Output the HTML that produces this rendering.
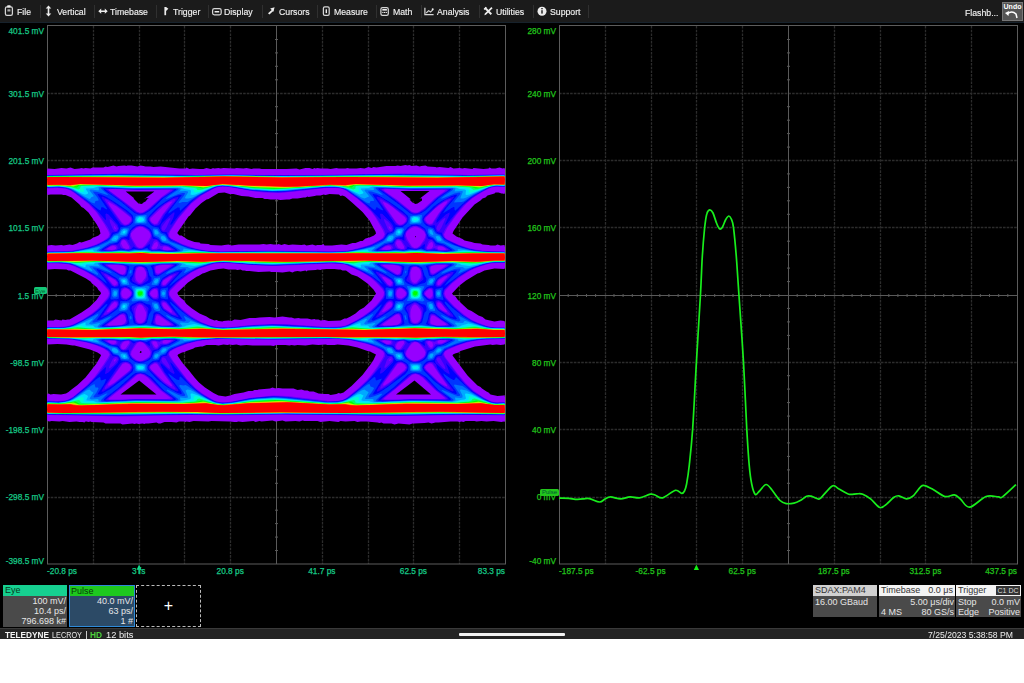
<!DOCTYPE html>
<html><head><meta charset="utf-8">
<style>
*{margin:0;padding:0;box-sizing:border-box}
html,body{width:1024px;height:683px;overflow:hidden;background:#fff}
body{position:relative;font-family:"Liberation Sans",sans-serif}
#scope{position:absolute;left:0;top:0;width:1024px;height:628px;background:#000}
#menu{position:absolute;left:0;top:0;width:1024px;height:23px;background:#1b1b1b;border-bottom:1px solid #17222c}
#menu svg{position:absolute}
.mi{position:absolute;top:6px;font-size:9.7px;color:#f2f2f2;white-space:nowrap;line-height:11px;transform:scaleX(0.9);transform-origin:0 0;-webkit-text-stroke:0.15px #f2f2f2}
.sep{position:absolute;top:5px;width:1.3px;height:12.5px;background:#303030}
.yl{position:absolute;font-size:8.3px;-webkit-text-stroke:0.25px currentColor;line-height:10px;white-space:nowrap;text-align:right}
.xl{position:absolute;font-size:8.3px;-webkit-text-stroke:0.25px currentColor;line-height:10px;white-space:nowrap}
.c1{color:#17c987}
.c2{color:#22c51c}
.bx{position:absolute;font-size:9px;line-height:10px;color:#e6e6e6;text-align:right;white-space:nowrap}
#status{position:absolute;left:0;top:628px;width:1024px;height:11px;background:#242424;border-top:1px solid #3a3a3a}
svg.full{position:absolute;left:0;top:0}
.gd{stroke:#2c2c2c;stroke-width:1.3;stroke-dasharray:2.6 1.1}
.ga{stroke:#5a5a5a;stroke-width:1}
.gb{stroke:#5c5c5c;stroke-width:1;fill:none}
</style></head><body>
<div id="scope">
<div id="menu">
<div class="mi" style="left:17px">File</div>
<div class="mi" style="left:56.5px">Vertical</div>
<div class="mi" style="left:110.4px">Timebase</div>
<div class="mi" style="left:172.5px">Trigger</div>
<div class="mi" style="left:224px">Display</div>
<div class="mi" style="left:278.5px">Cursors</div>
<div class="mi" style="left:333.5px">Measure</div>
<div class="mi" style="left:392.5px">Math</div>
<div class="mi" style="left:437px">Analysis</div>
<div class="mi" style="left:496px">Utilities</div>
<div class="mi" style="left:550px">Support</div>
<svg style="left:0;top:0" width="600" height="22" viewBox="0 0 600 22">
<g fill="none" stroke="#d6d6d6" stroke-width="1.25">
<rect x="5.4" y="6.8" width="7" height="8.6" rx="1.6"/>
<rect x="212.6" y="8.6" width="8.6" height="6.3" rx="1.8"/>
<rect x="323.4" y="6.9" width="5.8" height="8.4" rx="1.4"/>
<rect x="380.9" y="7.6" width="7.4" height="7.8" rx="1.6"/>
<path d="M424.9,7.8 V14.7 H433.6"/>
<path d="M426.2,13 L428.6,10.6 L430.6,12 L433,9.6" stroke-width="1.1"/>
</g>
<g fill="#ececec">
<rect x="7.2" y="5.2" width="3.4" height="2.4" rx="0.6"/>
<rect x="7.4" y="9.3" width="3" height="2.2" fill="#aaa"/>
<path d="M48.5,5.6 L51.3,8.6 L49.3,8.6 L49.3,13.6 L51.3,13.6 L48.5,16.6 L45.7,13.6 L47.7,13.6 L47.7,8.6 L45.7,8.6Z"/>
<path d="M98.3,11.2 L101.2,8.6 L101.2,10.4 L104.8,10.4 L104.8,8.6 L107.7,11.2 L104.8,13.8 L104.8,12 L101.2,12 L101.2,13.8Z"/>
<rect x="164.4" y="7" width="1.7" height="8.2"/>
<path d="M166,7 L168.4,8.8 L166,10.9Z"/>
<rect x="214.6" y="11" width="4.6" height="1.5"/>
<path d="M274.6,7.3 L270.2,8.5 L273.4,11.7Z"/>
<path d="M272.3,9.6 L268,13.2 L269.4,14.4 L273.6,10.8Z"/>
<rect x="325.6" y="9.3" width="1.4" height="3.8"/>
<rect x="382.3" y="9" width="4.6" height="1.6"/>
<rect x="382.3" y="11.9" width="1.2" height="1.1"/><rect x="384" y="11.9" width="1.2" height="1.1"/><rect x="385.7" y="11.9" width="1.2" height="1.1"/>
<circle cx="432.7" cy="9.2" r="1"/>
<path d="M484.2,8.4 L485.6,7 L492,13.5 L490.6,14.9Z"/>
<path d="M491.8,7.4 L492.6,8.2 L486,14.8 L484.4,15.2 L484.8,13.6 L491.4,7Z"/>
<path d="M483.6,9 L485.8,6.8 L486.8,7.8 L484.6,10Z"/>
<circle cx="542" cy="11.2" r="4.5"/>
</g>
<rect x="541.3" y="10.2" width="1.4" height="3.4" fill="#1b1b1b"/>
<rect x="541.3" y="8" width="1.4" height="1.3" fill="#1b1b1b"/>
</svg>
<div class="sep" style="left:40px"></div>
<div class="sep" style="left:94px"></div>
<div class="sep" style="left:156px"></div>
<div class="sep" style="left:208px"></div>
<div class="sep" style="left:262px"></div>
<div class="sep" style="left:317px"></div>
<div class="sep" style="left:376px"></div>
<div class="sep" style="left:421px"></div>
<div class="sep" style="left:479px"></div>
<div class="sep" style="left:533px"></div>
<div class="sep" style="left:588px"></div>
<div class="mi" style="left:965px;top:7px">Flashb...</div>
<div style="position:absolute;left:1002px;top:2px;width:21px;height:19px;background:#555;border:1px solid #777"></div>
<div style="position:absolute;left:1003px;top:3px;width:19px;font-size:7px;line-height:8px;color:#fff;text-align:center;font-weight:bold">Undo</div>
<svg style="left:1005px;top:10px" width="15" height="9" viewBox="0 0 15 9"><path d="M2,4 Q7,0 11,4 L12,8" stroke="#fff" stroke-width="1.5" fill="none"/><path d="M0,3 L4,1 L3.5,6Z" fill="#fff"/></svg>
</div>
<svg class="full" width="1024" height="628" viewBox="0 0 1024 628">
<line x1="93.5" y1="26" x2="93.5" y2="564" class="gd"/>
<line x1="139.5" y1="26" x2="139.5" y2="564" class="gd"/>
<line x1="184.5" y1="26" x2="184.5" y2="564" class="gd"/>
<line x1="230.5" y1="26" x2="230.5" y2="564" class="gd"/>
<line x1="322.5" y1="26" x2="322.5" y2="564" class="gd"/>
<line x1="368.5" y1="26" x2="368.5" y2="564" class="gd"/>
<line x1="413.5" y1="26" x2="413.5" y2="564" class="gd"/>
<line x1="459.5" y1="26" x2="459.5" y2="564" class="gd"/>
<line x1="47" y1="93.5" x2="505" y2="93.5" class="gd"/>
<line x1="47" y1="160.5" x2="505" y2="160.5" class="gd"/>
<line x1="47" y1="227.5" x2="505" y2="227.5" class="gd"/>
<line x1="47" y1="362.5" x2="505" y2="362.5" class="gd"/>
<line x1="47" y1="429.5" x2="505" y2="429.5" class="gd"/>
<line x1="47" y1="497.5" x2="505" y2="497.5" class="gd"/>
<line x1="276.5" y1="26" x2="276.5" y2="564" class="ga"/>
<line x1="47" y1="295.5" x2="505" y2="295.5" class="ga"/>
<line x1="56.2" y1="294.0" x2="56.2" y2="297.0" class="ga"/>
<line x1="65.3" y1="294.0" x2="65.3" y2="297.0" class="ga"/>
<line x1="74.5" y1="294.0" x2="74.5" y2="297.0" class="ga"/>
<line x1="83.6" y1="294.0" x2="83.6" y2="297.0" class="ga"/>
<line x1="102.0" y1="294.0" x2="102.0" y2="297.0" class="ga"/>
<line x1="111.1" y1="294.0" x2="111.1" y2="297.0" class="ga"/>
<line x1="120.3" y1="294.0" x2="120.3" y2="297.0" class="ga"/>
<line x1="129.4" y1="294.0" x2="129.4" y2="297.0" class="ga"/>
<line x1="147.8" y1="294.0" x2="147.8" y2="297.0" class="ga"/>
<line x1="156.9" y1="294.0" x2="156.9" y2="297.0" class="ga"/>
<line x1="166.1" y1="294.0" x2="166.1" y2="297.0" class="ga"/>
<line x1="175.2" y1="294.0" x2="175.2" y2="297.0" class="ga"/>
<line x1="193.6" y1="294.0" x2="193.6" y2="297.0" class="ga"/>
<line x1="202.7" y1="294.0" x2="202.7" y2="297.0" class="ga"/>
<line x1="211.9" y1="294.0" x2="211.9" y2="297.0" class="ga"/>
<line x1="221.0" y1="294.0" x2="221.0" y2="297.0" class="ga"/>
<line x1="239.4" y1="294.0" x2="239.4" y2="297.0" class="ga"/>
<line x1="248.5" y1="294.0" x2="248.5" y2="297.0" class="ga"/>
<line x1="257.7" y1="294.0" x2="257.7" y2="297.0" class="ga"/>
<line x1="266.8" y1="294.0" x2="266.8" y2="297.0" class="ga"/>
<line x1="285.2" y1="294.0" x2="285.2" y2="297.0" class="ga"/>
<line x1="294.3" y1="294.0" x2="294.3" y2="297.0" class="ga"/>
<line x1="303.5" y1="294.0" x2="303.5" y2="297.0" class="ga"/>
<line x1="312.6" y1="294.0" x2="312.6" y2="297.0" class="ga"/>
<line x1="331.0" y1="294.0" x2="331.0" y2="297.0" class="ga"/>
<line x1="340.1" y1="294.0" x2="340.1" y2="297.0" class="ga"/>
<line x1="349.3" y1="294.0" x2="349.3" y2="297.0" class="ga"/>
<line x1="358.4" y1="294.0" x2="358.4" y2="297.0" class="ga"/>
<line x1="376.8" y1="294.0" x2="376.8" y2="297.0" class="ga"/>
<line x1="385.9" y1="294.0" x2="385.9" y2="297.0" class="ga"/>
<line x1="395.1" y1="294.0" x2="395.1" y2="297.0" class="ga"/>
<line x1="404.2" y1="294.0" x2="404.2" y2="297.0" class="ga"/>
<line x1="422.6" y1="294.0" x2="422.6" y2="297.0" class="ga"/>
<line x1="431.7" y1="294.0" x2="431.7" y2="297.0" class="ga"/>
<line x1="440.9" y1="294.0" x2="440.9" y2="297.0" class="ga"/>
<line x1="450.0" y1="294.0" x2="450.0" y2="297.0" class="ga"/>
<line x1="468.4" y1="294.0" x2="468.4" y2="297.0" class="ga"/>
<line x1="477.5" y1="294.0" x2="477.5" y2="297.0" class="ga"/>
<line x1="486.7" y1="294.0" x2="486.7" y2="297.0" class="ga"/>
<line x1="495.8" y1="294.0" x2="495.8" y2="297.0" class="ga"/>
<line x1="275.0" y1="39.5" x2="278.0" y2="39.5" class="ga"/>
<line x1="275.0" y1="52.9" x2="278.0" y2="52.9" class="ga"/>
<line x1="275.0" y1="66.3" x2="278.0" y2="66.3" class="ga"/>
<line x1="275.0" y1="79.8" x2="278.0" y2="79.8" class="ga"/>
<line x1="275.0" y1="106.7" x2="278.0" y2="106.7" class="ga"/>
<line x1="275.0" y1="120.2" x2="278.0" y2="120.2" class="ga"/>
<line x1="275.0" y1="133.6" x2="278.0" y2="133.6" class="ga"/>
<line x1="275.0" y1="147.1" x2="278.0" y2="147.1" class="ga"/>
<line x1="275.0" y1="173.9" x2="278.0" y2="173.9" class="ga"/>
<line x1="275.0" y1="187.4" x2="278.0" y2="187.4" class="ga"/>
<line x1="275.0" y1="200.8" x2="278.0" y2="200.8" class="ga"/>
<line x1="275.0" y1="214.3" x2="278.0" y2="214.3" class="ga"/>
<line x1="275.0" y1="241.2" x2="278.0" y2="241.2" class="ga"/>
<line x1="275.0" y1="254.7" x2="278.0" y2="254.7" class="ga"/>
<line x1="275.0" y1="268.1" x2="278.0" y2="268.1" class="ga"/>
<line x1="275.0" y1="281.6" x2="278.0" y2="281.6" class="ga"/>
<line x1="275.0" y1="308.4" x2="278.0" y2="308.4" class="ga"/>
<line x1="275.0" y1="321.9" x2="278.0" y2="321.9" class="ga"/>
<line x1="275.0" y1="335.4" x2="278.0" y2="335.4" class="ga"/>
<line x1="275.0" y1="348.8" x2="278.0" y2="348.8" class="ga"/>
<line x1="275.0" y1="375.7" x2="278.0" y2="375.7" class="ga"/>
<line x1="275.0" y1="389.1" x2="278.0" y2="389.1" class="ga"/>
<line x1="275.0" y1="402.6" x2="278.0" y2="402.6" class="ga"/>
<line x1="275.0" y1="416.1" x2="278.0" y2="416.1" class="ga"/>
<line x1="275.0" y1="442.9" x2="278.0" y2="442.9" class="ga"/>
<line x1="275.0" y1="456.4" x2="278.0" y2="456.4" class="ga"/>
<line x1="275.0" y1="469.9" x2="278.0" y2="469.9" class="ga"/>
<line x1="275.0" y1="483.3" x2="278.0" y2="483.3" class="ga"/>
<line x1="275.0" y1="510.2" x2="278.0" y2="510.2" class="ga"/>
<line x1="275.0" y1="523.6" x2="278.0" y2="523.6" class="ga"/>
<line x1="275.0" y1="537.1" x2="278.0" y2="537.1" class="ga"/>
<line x1="275.0" y1="550.5" x2="278.0" y2="550.5" class="ga"/>
<rect x="47.5" y="25.5" width="458" height="538.5" class="gb"/>
<line x1="605.5" y1="26" x2="605.5" y2="564" class="gd"/>
<line x1="651.5" y1="26" x2="651.5" y2="564" class="gd"/>
<line x1="696.5" y1="26" x2="696.5" y2="564" class="gd"/>
<line x1="742.5" y1="26" x2="742.5" y2="564" class="gd"/>
<line x1="834.5" y1="26" x2="834.5" y2="564" class="gd"/>
<line x1="880.5" y1="26" x2="880.5" y2="564" class="gd"/>
<line x1="925.5" y1="26" x2="925.5" y2="564" class="gd"/>
<line x1="971.5" y1="26" x2="971.5" y2="564" class="gd"/>
<line x1="559" y1="93.5" x2="1017" y2="93.5" class="gd"/>
<line x1="559" y1="160.5" x2="1017" y2="160.5" class="gd"/>
<line x1="559" y1="227.5" x2="1017" y2="227.5" class="gd"/>
<line x1="559" y1="362.5" x2="1017" y2="362.5" class="gd"/>
<line x1="559" y1="429.5" x2="1017" y2="429.5" class="gd"/>
<line x1="559" y1="497.5" x2="1017" y2="497.5" class="gd"/>
<line x1="788.5" y1="26" x2="788.5" y2="564" class="ga"/>
<line x1="559" y1="295.5" x2="1017" y2="295.5" class="ga"/>
<line x1="568.2" y1="294.0" x2="568.2" y2="297.0" class="ga"/>
<line x1="577.3" y1="294.0" x2="577.3" y2="297.0" class="ga"/>
<line x1="586.5" y1="294.0" x2="586.5" y2="297.0" class="ga"/>
<line x1="595.6" y1="294.0" x2="595.6" y2="297.0" class="ga"/>
<line x1="614.0" y1="294.0" x2="614.0" y2="297.0" class="ga"/>
<line x1="623.1" y1="294.0" x2="623.1" y2="297.0" class="ga"/>
<line x1="632.3" y1="294.0" x2="632.3" y2="297.0" class="ga"/>
<line x1="641.4" y1="294.0" x2="641.4" y2="297.0" class="ga"/>
<line x1="659.8" y1="294.0" x2="659.8" y2="297.0" class="ga"/>
<line x1="668.9" y1="294.0" x2="668.9" y2="297.0" class="ga"/>
<line x1="678.1" y1="294.0" x2="678.1" y2="297.0" class="ga"/>
<line x1="687.2" y1="294.0" x2="687.2" y2="297.0" class="ga"/>
<line x1="705.6" y1="294.0" x2="705.6" y2="297.0" class="ga"/>
<line x1="714.7" y1="294.0" x2="714.7" y2="297.0" class="ga"/>
<line x1="723.9" y1="294.0" x2="723.9" y2="297.0" class="ga"/>
<line x1="733.0" y1="294.0" x2="733.0" y2="297.0" class="ga"/>
<line x1="751.4" y1="294.0" x2="751.4" y2="297.0" class="ga"/>
<line x1="760.5" y1="294.0" x2="760.5" y2="297.0" class="ga"/>
<line x1="769.7" y1="294.0" x2="769.7" y2="297.0" class="ga"/>
<line x1="778.8" y1="294.0" x2="778.8" y2="297.0" class="ga"/>
<line x1="797.2" y1="294.0" x2="797.2" y2="297.0" class="ga"/>
<line x1="806.3" y1="294.0" x2="806.3" y2="297.0" class="ga"/>
<line x1="815.5" y1="294.0" x2="815.5" y2="297.0" class="ga"/>
<line x1="824.6" y1="294.0" x2="824.6" y2="297.0" class="ga"/>
<line x1="843.0" y1="294.0" x2="843.0" y2="297.0" class="ga"/>
<line x1="852.1" y1="294.0" x2="852.1" y2="297.0" class="ga"/>
<line x1="861.3" y1="294.0" x2="861.3" y2="297.0" class="ga"/>
<line x1="870.4" y1="294.0" x2="870.4" y2="297.0" class="ga"/>
<line x1="888.8" y1="294.0" x2="888.8" y2="297.0" class="ga"/>
<line x1="897.9" y1="294.0" x2="897.9" y2="297.0" class="ga"/>
<line x1="907.1" y1="294.0" x2="907.1" y2="297.0" class="ga"/>
<line x1="916.2" y1="294.0" x2="916.2" y2="297.0" class="ga"/>
<line x1="934.6" y1="294.0" x2="934.6" y2="297.0" class="ga"/>
<line x1="943.7" y1="294.0" x2="943.7" y2="297.0" class="ga"/>
<line x1="952.9" y1="294.0" x2="952.9" y2="297.0" class="ga"/>
<line x1="962.0" y1="294.0" x2="962.0" y2="297.0" class="ga"/>
<line x1="980.4" y1="294.0" x2="980.4" y2="297.0" class="ga"/>
<line x1="989.5" y1="294.0" x2="989.5" y2="297.0" class="ga"/>
<line x1="998.7" y1="294.0" x2="998.7" y2="297.0" class="ga"/>
<line x1="1007.8" y1="294.0" x2="1007.8" y2="297.0" class="ga"/>
<line x1="787.0" y1="39.5" x2="790.0" y2="39.5" class="ga"/>
<line x1="787.0" y1="52.9" x2="790.0" y2="52.9" class="ga"/>
<line x1="787.0" y1="66.3" x2="790.0" y2="66.3" class="ga"/>
<line x1="787.0" y1="79.8" x2="790.0" y2="79.8" class="ga"/>
<line x1="787.0" y1="106.7" x2="790.0" y2="106.7" class="ga"/>
<line x1="787.0" y1="120.2" x2="790.0" y2="120.2" class="ga"/>
<line x1="787.0" y1="133.6" x2="790.0" y2="133.6" class="ga"/>
<line x1="787.0" y1="147.1" x2="790.0" y2="147.1" class="ga"/>
<line x1="787.0" y1="173.9" x2="790.0" y2="173.9" class="ga"/>
<line x1="787.0" y1="187.4" x2="790.0" y2="187.4" class="ga"/>
<line x1="787.0" y1="200.8" x2="790.0" y2="200.8" class="ga"/>
<line x1="787.0" y1="214.3" x2="790.0" y2="214.3" class="ga"/>
<line x1="787.0" y1="241.2" x2="790.0" y2="241.2" class="ga"/>
<line x1="787.0" y1="254.7" x2="790.0" y2="254.7" class="ga"/>
<line x1="787.0" y1="268.1" x2="790.0" y2="268.1" class="ga"/>
<line x1="787.0" y1="281.6" x2="790.0" y2="281.6" class="ga"/>
<line x1="787.0" y1="308.4" x2="790.0" y2="308.4" class="ga"/>
<line x1="787.0" y1="321.9" x2="790.0" y2="321.9" class="ga"/>
<line x1="787.0" y1="335.4" x2="790.0" y2="335.4" class="ga"/>
<line x1="787.0" y1="348.8" x2="790.0" y2="348.8" class="ga"/>
<line x1="787.0" y1="375.7" x2="790.0" y2="375.7" class="ga"/>
<line x1="787.0" y1="389.1" x2="790.0" y2="389.1" class="ga"/>
<line x1="787.0" y1="402.6" x2="790.0" y2="402.6" class="ga"/>
<line x1="787.0" y1="416.1" x2="790.0" y2="416.1" class="ga"/>
<line x1="787.0" y1="442.9" x2="790.0" y2="442.9" class="ga"/>
<line x1="787.0" y1="456.4" x2="790.0" y2="456.4" class="ga"/>
<line x1="787.0" y1="469.9" x2="790.0" y2="469.9" class="ga"/>
<line x1="787.0" y1="483.3" x2="790.0" y2="483.3" class="ga"/>
<line x1="787.0" y1="510.2" x2="790.0" y2="510.2" class="ga"/>
<line x1="787.0" y1="523.6" x2="790.0" y2="523.6" class="ga"/>
<line x1="787.0" y1="537.1" x2="790.0" y2="537.1" class="ga"/>
<line x1="787.0" y1="550.5" x2="790.0" y2="550.5" class="ga"/>
<rect x="559.5" y="25.5" width="458" height="538.5" class="gb"/>
<defs><clipPath id="cpl"><rect x="47" y="26" width="458" height="538"/></clipPath><filter id="eblur" x="-2%" y="-2%" width="104%" height="104%"><feGaussianBlur stdDeviation="0.55"/></filter></defs><g clip-path="url(#cpl)"><g transform="translate(47.5 26.5) scale(0.5)" fill-rule="evenodd">
<path fill="rgb(150,0,255)" d="M730 794l-6 2 -22 -2 -8 2 -6 -2 -16 0 -4 -2 -4 1 -4 -1 -22 -2 -12 0 -6 1 -6 -2 -18 1 -10 -1 -4 2 -18 -2 -18 2 -6 -2 -26 0 -4 -1 -6 2 -8 -1 -20 1 -6 -2 -14 2 -6 -2 -22 2 -4 -1 -8 2 -4 -2 -22 2 -8 -1 -4 1 -4 0 -10 -1 -36 -1 -6 1 -30 -1 -8 2 -6 -1 -2 1 -4 -1 -9 0 -5 2 -10 -1 -14 0 -8 3 -4 0 -4 -2 -16 2 -6 0 -2 1 -4 -1 -8 1 -4 -1 -4 1 -4 -1 -20 2 -4 -2 -30 0 -4 -2 -24 -1 -2 -1 -4 1 -4 -1 -2 0 -2 2 -4 -1 -6 0 -6 -1 -14 1 -14 -2 -6 1 -16 -1 -4 1 -4 -1 -2 -5 0 -18 0 -26 2 -5 2 -1 4 2 6 -1 15 1 10 -2 5 -3 6 -5 12 -9 16 -15 22 -28 9 -16 -1 -2 -6 -4 -15 -6 -31 -8 -4 0 -12 -2 -18 -1 -20 1 -2 -8 1 -38 1 -2 12 0 4 -2 12 2 2 -2 6 1 4 -1 4 0 24 -14 16 -11 14 -14 9 -13 -1 -3 -4 -4 -3 -5 -10 -8 -3 -4 -9 -6 -31 -16 -4 0 -4 -2 -24 -1 -12 1 -2 0 -1 -2 -1 -6 0 -32 2 -8 8 -1 8 1 12 -1 4 1 12 -2 6 1 9 -3 5 -3 4 1 18 -6 4 -3 12 -5 4 -4 -2 -8 -6 -11 -16 -23 -10 -9 -4 -2 -4 -5 -16 -14 -12 -5 -4 0 -4 -1 -22 0 -6 1 -2 -7 0 -22 0 -18 2 -6 14 1 14 -2 10 1 8 -2 8 3 10 -1 4 -1 4 1 4 -1 10 1 4 -2 22 0 4 -2 4 1 12 -3 6 2 4 -1 12 -1 4 1 2 -1 8 0 12 2 6 -2 6 1 4 1 10 0 6 1 14 -1 38 4 12 0 2 -2 6 3 6 -1 14 1 8 0 6 -2 8 2 4 -1 0 -1 4 1 8 -1 4 1 6 -1 22 1 4 -1 14 1 6 -1 10 2 4 -1 12 0 4 1 34 0 8 0 8 0 20 -1 6 2 12 -3 8 0 6 2 4 -2 2 1 4 -1 6 1 14 0 6 1 12 -2 4 1 14 0 4 -1 4 1 14 0 8 -1 8 1 8 -3 6 2 4 -2 6 1 20 -3 18 0 4 -1 6 1 10 -2 4 1 4 -1 4 2 10 -1 6 2 4 -1 8 -1 4 2 16 1 2 1 6 -1 18 2 4 -2 6 3 12 -1 6 1 4 -1 16 2 2 -2 20 2 10 -1 2 -2 4 2 8 0 8 -2 6 2 4 -1 2 7 0 18 0 20 -2 7 -4 -1 -2 0 -6 -2 -6 0 -2 2 -14 4 -4 4 -6 2 -4 4 -12 8 -24 26 -18 27 -2 5 8 6 12 5 4 3 14 3 6 2 12 1 4 2 12 1 4 1 10 0 4 -2 6 2 8 -1 2 9 -1 36 -1 3 -20 -1 -20 4 -10 5 -4 1 -23 14 -13 10 -15 16 3 4 4 2 4 6 8 8 13 12 7 3 14 9 8 3 6 5 18 4 12 -2 8 1 2 7 0 18 0 18 -2 4 -8 1 -8 -1 -8 1 -4 -1 -31 4 -29 9 -4 3 -7 2 -4 2 -1 2 30 40 20 20 6 3 3 3 9 6 4 2 4 4 14 3 12 -1 2 -1 2 9 0 36 -1 6 -1 3 -2 -1 -4 1 -16 -2 -14 1 -10 -1 -10 1 -4 -1 -18 0 -4 2 -4 -1 -4 1 -4 -1 -14 0 -24 2 -6 0 -8 2 -6 -2 -8 1 -20 1 -4 0zM569 438l19 -2 10 1 12 -4 6 0 10 -4 4 0 6 -5 8 -2 9 -4 4 -4 -1 -4 -12 -22 -14 -17 -21 -19 -14 -12 -5 -2 -4 1 -3 -3 -19 -1 -8 2 -4 -1 -6 2 -8 0 -4 1 -12 2 -2 -1 -4 2 -4 0 -12 2 -2 0 -8 0 -6 2 -6 0 -12 1 -6 -1 -14 0 -6 -1 -6 0 -4 -2 -14 0 -14 -3 -14 -1 -16 -4 -8 0 -10 -3 -12 1 -20 12 -4 1 -10 7 -12 11 -11 14 -3 2 -22 32 0 2 4 4 4 0 12 8 14 5 10 1 2 2 16 1 4 2 22 1 6 -1 8 -1 6 2 14 -2 42 0 8 -1 6 1 8 -1 6 1 8 0 2 -1 6 2 6 -2 8 2 8 -1 18 1 6 -1 4 2 12 -2 6 2 4 -1 8 0 4 -2 2 3 15 0zM190 354l2 -2 4 -2 4 -5 3 -1 -5 -1 -6 2 -4 -2 -14 0 -2 1 10 10 6 1 2 -1zM740 354l9 -6 0 -2 0 -2 -11 -1 -14 3 6 6 6 3 4 -1zM736 422l1 -2 -1 -1 -1 1 1 2zM586 588l8 -4 4 0 8 -4 10 -6 8 -7 9 -5 15 -14 9 -14 -5 -8 -12 -12 -14 -10 -6 -4 -12 -4 -11 -8 -7 0 -4 -2 -4 0 -8 -1 -16 0 -10 1 -2 1 -6 -1 -4 1 -16 1 -2 2 -2 -2 -10 2 -6 -1 -6 1 -4 2 -6 -2 -14 2 -14 -1 -8 0 -4 -1 -22 1 -18 -2 -6 0 -4 -1 -4 0 -4 -2 -6 1 -4 -1 -14 0 -10 -2 -10 1 -16 3 -12 5 -4 1 -8 5 -3 1 -18 12 -21 20 0 2 2 4 6 6 4 3 6 8 11 9 15 10 14 6 6 4 10 4 4 -1 4 2 8 1 2 -1 10 -1 6 1 6 -3 12 1 18 -4 12 0 8 -1 20 -1 10 1 16 -2 14 2 4 0 6 2 8 -1 4 1 14 0 8 2 6 -1 2 1 6 0 4 2 8 -1 8 2 24 -1zM365 738l9 -3 18 -3 10 -3 8 0 4 -2 6 0 2 -1 23 -2 5 -2 6 2 6 -1 8 1 4 0 18 0 8 3 8 -1 6 2 6 0 4 2 8 0 10 4 12 1 8 0 4 2 12 -2 4 -2 4 1 6 -2 16 -13 22 -22 16 -21 6 -9 5 -11 -12 -6 -5 -1 -20 -7 -18 -4 -22 -2 -6 1 -14 0 -4 -1 -14 1 -12 -1 -14 2 -16 -1 -6 1 -6 -1 -4 1 -8 -1 -18 0 -6 2 -6 -1 -26 0 -6 0 -4 0 -12 -1 -12 1 -8 -2 -8 1 -6 -1 -4 1 -8 -1 -10 2 -6 -1 -18 0 -8 3 -4 0 -11 2 -3 2 -14 5 -4 2 -5 1 -8 4 -1 2 10 15 13 15 11 14 9 10 12 10 17 11 10 5 14 2 9 -2zM188 652l0 -2 -2 -1 -2 3 2 1 2 -1zM198 728l4 -2 -1 -2 -11 -9 -6 1 -8 8 0 2 14 0 8 2zM748 728l1 -2 -1 -4 -6 -5 -6 -3 -11 10 0 2 3 1 8 0 6 -1 2 0 2 2 2 0z"/>
<g filter="url(#eblur)">
<path fill="rgb(98, 0, 255)" d="M768 778l-76 1 -72 -1 -154 -2 -106 2 -74 -1 -138 3 -148 -3 -1 -11 1 -18 18 1 17 -1 7 -2 10 -6 26 -22 16 -17 18 -25 9 -14 3 -6 -3 -6 -9 -6 -14 -6 -20 -6 -29 -6 -49 -1 -1 -11 1 -13 22 0 16 -1 13 -4 16 -8 19 -12 15 -12 19 -22 2 -4 1 -4 -1 -4 -2 -4 -17 -18 -13 -10 -18 -10 -28 -12 -14 -2 -30 0 -1 -12 1 -12 28 0 22 -2 29 -6 18 -6 16 -8 8 -6 3 -6 -2 -6 -8 -14 -16 -24 -15 -16 -28 -22 -9 -6 -10 -4 -16 -1 -20 1 -1 -16 1 -11 78 -1 70 -2 150 3 60 -1 116 1 146 -1 86 -2 138 3 70 -1 1 12 -1 13 -14 -1 -12 2 -13 6 -23 14 -14 12 -20 23 -18 25 -7 14 2 6 5 4 21 10 24 8 22 4 13 1 34 1 1 12 -1 11 -14 0 -15 1 -20 6 -19 8 -19 12 -18 14 -13 14 -2 6 3 8 17 18 19 16 14 10 13 6 22 8 13 2 19 0 1 12 -1 11 -41 1 -26 4 -21 6 -20 8 -8 4 -3 2 -2 4 1 4 2 4 24 32 17 20 15 14 20 14 16 8 10 2 16 -1 1 15 -1 12 -62 -1 -84 1zM576 450l27 -2 38 -10 10 -4 15 -8 5 -4 3 -6 -3 -8 -15 -26 -9 -12 -12 -12 -16 -14 -22 -16 -11 -4 -10 -1 -18 0 -72 8 -24 2 -30 -1 -24 -3 -52 -9 -8 0 -10 2 -9 4 -21 12 -20 16 -26 30 -17 26 -2 6 1 4 3 4 20 10 29 10 21 4 29 2 96 -2 134 2zM190 372l10 -6 28 -25 18 -13 -2 -1 -6 -1 -56 1 -52 -2 -7 1 0 2 3 2 26 19 27 21 5 2 6 0zM740 372l13 -8 21 -20 22 -16 -6 -2 -56 1 -54 -2 -8 1 3 4 25 17 28 23 6 2 6 0zM219 394l11 -18 20 -26 -2 0 -6 2 -11 8 -25 24 0 4 4 5 4 2 5 -1zM769 394l13 -20 16 -20 2 -5 -8 3 -9 6 -10 8 -17 17 0 5 4 5 4 2 5 -1zM158 396l4 -2 4 -4 1 -4 -1 -4 -28 -22 -16 -9 -1 1 3 6 25 34 5 4 4 0zM708 396l4 -2 4 -4 1 -4 -2 -4 -24 -20 -12 -8 -7 -3 -1 1 3 6 24 34 5 4 5 0zM137 404l-3 -5 -1 1 1 4 2 1 1 -1zM687 404l-3 -4 -2 0 2 4 2 1 1 -1zM190 442l6 -6 7 -10 3 -6 0 -4 -3 -6 -5 -4 -8 -5 -6 0 -6 2 -8 7 -3 4 0 4 2 6 10 16 5 3 6 -1zM740 442l5 -4 8 -12 2 -4 1 -6 -3 -6 -5 -4 -7 -4 -7 -1 -6 2 -8 6 -3 5 0 4 3 8 9 14 5 3 6 -1zM163 444l0 -4 -6 -10 -3 -3 -5 1 -1 2 -1 4 4 8 7 3 5 -1zM713 444l0 -4 -6 -10 -3 -2 -5 0 -1 2 -1 4 4 8 7 3 5 -1zM218 444l3 -6 -1 -6 -2 -1 -4 2 -5 9 0 2 3 1 6 -1zM768 444l3 -4 0 -4 -1 -4 -2 -1 -4 2 -5 9 0 2 3 1 6 -1zM135 446l2 -2 0 -2 -1 -2 -4 -1 -6 1 -6 4 -1 2 9 1 7 -1zM248 446l-5 -4 -7 -2 -4 0 -2 4 1 2 7 2 6 -1 4 -1zM685 446l2 -2 0 -2 -1 -2 -4 -1 -6 1 -6 4 -1 2 9 1 7 -1zM798 446l-5 -4 -5 -2 -6 0 -2 2 0 2 1 2 5 1 8 0 4 -1zM357 602l53 -5 38 -2 26 0 84 6 30 -1 8 -2 17 -8 17 -10 14 -10 13 -12 13 -16 2 -4 1 -6 -3 -6 -13 -14 -11 -10 -13 -8 -15 -8 -23 -10 -23 -2 -114 5 -52 -2 -50 -4 -21 1 -31 10 -16 8 -22 16 -20 20 -2 4 0 4 4 7 20 21 20 16 17 10 20 8 19 4 13 0zM154 494l2 -4 0 -6 -2 -4 -4 -2 -24 -2 -4 1 -2 1 26 17 4 1 4 -2zM223 494l25 -16 -6 -1 -12 0 -8 1 -4 1 -2 3 0 8 2 3 2 1 3 0zM704 494l2 -4 0 -6 -2 -4 -2 -1 -8 -2 -14 -1 -6 0 -4 2 26 16 4 2 4 -2zM773 494l25 -16 -6 -1 -12 0 -8 1 -4 1 -2 3 0 8 3 4 4 0zM188 512l8 -10 1 -4 0 -6 -3 -6 -2 -3 -4 -2 -4 0 -4 2 -2 3 -2 8 0 8 2 6 4 4 2 1 4 -1zM738 512l8 -10 1 -8 -1 -6 -3 -4 -5 -3 -4 0 -4 1 -2 4 -2 6 0 8 1 6 3 5 4 2 4 -1zM138 516l1 -4 -3 -4 -10 -6 -6 -2 1 4 9 11 4 3 4 -2zM236 516l14 -16 -2 -1 -3 1 -13 8 -2 4 0 4 2 1 4 -1zM688 516l1 -4 -3 -4 -10 -6 -7 -2 2 4 9 11 4 3 2 0 2 -2zM785 516l15 -16 -2 -1 -4 1 -12 8 -2 4 0 4 2 1 3 -1zM158 544l8 -6 1 -6 -5 -6 -4 -2 -4 0 -3 2 -3 4 0 7 2 4 2 2 6 1zM708 544l8 -6 1 -6 -6 -6 -3 -2 -4 0 -5 4 -1 4 0 4 1 4 3 3 6 1zM218 542l2 -4 0 -8 -2 -4 -4 -1 -6 4 -3 5 2 4 5 4 6 0zM767 542l3 -4 0 -7 -2 -5 -4 -1 -6 4 -3 5 1 3 4 4 4 2 3 -1zM124 570l14 -10 1 -4 -1 -4 -4 -1 -6 5 -9 14 1 2 4 -2zM250 572l-3 -6 -10 -12 -3 -2 -2 0 -2 1 0 5 4 6 12 8 4 0zM674 570l9 -6 5 -4 1 -4 -1 -4 -2 -1 -4 1 -4 4 -9 14 1 1 4 -1zM798 572l1 -2 -1 -2 -10 -13 -4 -3 -2 0 -2 1 0 5 2 4 8 6 8 4zM740 592l4 -4 2 -4 1 -12 -2 -6 -5 -7 -4 -3 -2 0 -4 3 -3 7 -1 6 0 8 2 8 3 4 5 1 4 -1zM190 592l4 -4 2 -4 1 -6 0 -6 -6 -12 -3 -3 -4 -1 -4 3 -3 7 -1 6 0 10 2 6 3 4 5 1 4 -1zM689 598l12 -2 5 -4 1 -4 -1 -6 -2 -4 -2 -2 -4 0 -3 2 -25 18 2 2 17 0zM137 598l11 -1 6 -3 3 -6 -1 -6 -2 -4 -4 -2 -4 1 -26 19 2 2 15 0zM242 598l6 -2 -24 -17 -4 -1 -2 1 -2 5 0 6 2 5 8 3 16 0zM794 598l4 -2 -2 -2 -22 -15 -4 -1 -2 1 -2 5 0 6 0 3 2 2 8 3 18 0zM354 752l15 -2 35 -7 48 -5 28 1 84 10 14 0 12 -2 6 -3 8 -6 17 -14 17 -16 10 -12 12 -16 12 -20 1 -6 -2 -4 -6 -4 -17 -8 -13 -4 -36 -8 -27 -1 -120 2 -100 -2 -29 1 -26 4 -15 4 -22 8 -15 8 -1 2 -1 4 9 14 26 34 17 18 15 12 23 14 11 3 10 1zM136 634l1 -2 0 -2 -3 -2 -14 0 0 2 6 4 6 1 4 -1zM238 634l8 -4 2 -2 -12 -1 -4 1 -2 2 0 2 2 2 6 0zM686 634l1 -2 0 -2 -4 -2 -14 0 1 2 8 5 4 0 4 -1zM788 634l8 -4 2 -2 -12 -1 -4 1 -2 2 0 2 2 2 6 0zM156 644l7 -10 1 -2 -2 -3 -8 1 -3 2 -3 4 -1 4 1 4 4 2 4 -2zM219 642l2 -4 -2 -6 -3 -2 -6 0 0 4 4 6 2 2 3 0zM706 644l7 -10 0 -4 -3 -1 -6 1 -3 2 -3 4 -1 4 1 4 4 2 4 -2zM769 642l2 -4 -1 -6 -6 -3 -4 1 0 4 4 6 2 2 3 0zM191 668l7 -4 5 -4 2 -4 1 -4 -3 -6 -9 -11 -4 -3 -6 -1 -4 2 -4 5 -8 12 -1 6 3 5 8 6 6 2 7 -1zM740 668l8 -4 5 -4 2 -4 1 -4 -3 -6 -8 -10 -5 -4 -6 -1 -5 3 -5 6 -6 10 -1 6 3 5 8 6 6 2 6 -1zM134 670l2 -2 1 -2 -1 -1 -2 1 -1 2 0 2 1 0zM685 668l2 -2 -1 -1 -2 1 -1 2 1 1 1 -1zM124 718l10 -6 30 -24 3 -6 -3 -6 -4 -2 -4 -1 -6 2 -28 39 -1 4 3 0zM248 720l1 -2 -1 -2 -15 -20 -13 -20 -3 -2 -3 0 -7 4 -2 4 3 5 27 25 13 8zM674 718l12 -8 28 -23 3 -5 -3 -5 -4 -3 -4 -1 -6 2 -28 39 -1 4 3 0zM799 720l0 -2 -1 -2 -16 -22 -12 -18 -3 -2 -3 0 -7 4 -2 4 3 5 26 25 10 6 5 2zM141 746l35 -1 62 0 8 -1 -1 -2 -19 -14 -26 -26 -8 -5 -6 -2 -4 1 -4 2 -24 21 -31 25 0 2 3 0 15 0zM691 746l35 -1 62 0 8 -1 -2 -2 -20 -16 -24 -24 -8 -5 -6 -2 -4 1 -4 2 -55 46 1 2 2 0 15 0z"/>
<path fill="rgb(52, 0, 255)" d="M732 778l-40 1 -144 -3 -82 0 -106 1 -76 -1 -142 3 -142 -3 -1 -10 1 -17 14 1 14 0 10 -2 13 -6 29 -24 17 -18 11 -14 15 -22 3 -8 -3 -6 -9 -6 -13 -6 -20 -6 -33 -6 -48 -2 -1 -10 1 -13 22 1 19 -2 12 -4 19 -10 19 -12 12 -10 18 -20 3 -6 1 -4 -1 -4 -2 -4 -14 -16 -13 -10 -21 -12 -21 -10 -15 -4 -18 -1 -20 0 -1 -11 1 -12 42 0 15 -2 25 -6 18 -6 18 -10 6 -5 2 -7 -5 -12 -21 -30 -17 -18 -29 -22 -10 -6 -8 -2 -14 -2 -22 1 -1 -15 1 -11 146 -2 152 2 70 -1 106 2 158 -2 58 -1 154 2 70 -1 1 12 -1 13 -16 -1 -12 2 -20 10 -18 12 -16 14 -17 20 -19 26 -4 8 -1 4 2 6 7 5 24 11 18 6 19 4 19 2 34 0 1 12 -1 11 -16 -1 -16 2 -25 8 -14 6 -19 12 -16 13 -13 13 -2 4 -1 4 1 4 3 5 18 19 19 16 16 10 13 6 17 6 15 2 20 0 1 12 -1 11 -47 1 -29 5 -20 7 -19 8 -5 4 -3 6 3 6 24 32 17 20 17 16 22 14 12 6 10 2 18 0 1 14 -1 11 -78 -1 -104 2zM592 450l15 -2 17 -4 25 -8 22 -12 3 -4 2 -6 -3 -8 -15 -24 -9 -12 -12 -12 -17 -14 -22 -16 -9 -4 -13 -2 -15 0 -81 9 -18 1 -24 -1 -26 -2 -53 -9 -13 0 -10 2 -30 16 -20 16 -16 18 -11 14 -15 22 -3 6 1 6 4 4 23 12 16 6 16 4 27 4 38 0 76 -1 106 1 44 0zM193 372l13 -9 23 -21 21 -14 0 -2 -78 0 -48 -2 -5 2 35 26 24 19 8 3 7 -2zM743 372l12 -8 25 -23 20 -13 0 -2 -76 0 -50 -2 -4 1 -2 1 38 28 23 18 7 2 7 -2zM156 398l6 -2 6 -6 1 -4 -1 -4 -14 -12 -20 -15 -15 -9 -5 -1 5 9 29 40 4 3 4 1zM220 396l12 -20 22 -26 2 -4 0 -1 -4 0 -6 3 -12 7 -12 10 -17 17 -1 2 0 4 4 5 6 4 6 -1zM706 398l6 -2 6 -6 1 -6 -3 -4 -34 -26 -14 -8 -4 0 3 6 31 42 4 3 4 1zM770 396l14 -22 21 -26 2 -2 -1 -2 -10 4 -14 9 -27 25 -2 4 1 2 4 6 6 3 6 -1zM234 408l4 -6 8 -18 -2 -1 -6 5 -9 12 -1 4 1 2 1 2 4 0zM784 408l4 -6 8 -18 -2 -1 -4 3 -6 6 -5 8 -1 4 2 4 2 1 2 -1zM139 408l2 -4 -3 -6 -10 -11 -4 -2 1 7 6 14 2 2 3 2 3 -2zM689 408l1 -4 -2 -5 -6 -8 -8 -6 -1 1 1 4 7 16 5 4 3 -2zM189 444l6 -4 7 -8 5 -8 1 -6 -2 -6 -5 -6 -9 -6 -8 -1 -6 2 -9 7 -3 6 -1 6 4 8 7 12 6 4 7 0zM739 444l6 -4 10 -12 2 -6 0 -6 -3 -7 -8 -6 -8 -4 -6 0 -6 3 -8 7 -2 5 -1 6 3 8 10 14 6 2 5 0zM164 446l2 -2 0 -4 -7 -12 -7 -3 -4 2 -3 7 0 4 2 4 8 4 9 0zM714 446l2 -2 0 -4 -8 -12 -6 -3 -4 1 -3 6 0 6 1 2 4 4 4 2 10 0zM251 448l1 -2 -12 -7 -6 -1 -8 1 -4 -8 -4 -4 -4 1 -2 2 -5 12 1 4 2 1 8 -1 6 -2 9 4 18 0zM800 448l2 -2 -12 -7 -6 -1 -8 1 -4 -8 -4 -4 -4 1 -2 2 -5 12 1 4 2 1 6 -1 8 -3 9 5 17 0zM130 448l8 -2 2 -2 0 -4 -4 -3 -6 0 -6 3 -9 6 3 2 12 0zM680 448l8 -2 2 -2 1 -2 -1 -2 -4 -3 -6 0 -7 3 -8 6 4 2 11 0zM368 602l44 -5 36 -1 26 0 90 6 28 -2 11 -4 16 -8 13 -8 14 -10 12 -11 14 -17 2 -6 0 -6 -4 -7 -16 -16 -12 -9 -14 -8 -31 -14 -9 -2 -20 -1 -110 5 -42 -1 -62 -5 -22 2 -30 10 -16 8 -27 20 -15 16 -1 4 0 6 6 8 19 20 15 12 12 8 12 6 22 8 15 2 24 0zM155 496l2 -4 1 -8 -1 -4 -4 -2 -11 -2 -26 0 1 2 3 2 24 15 6 2 5 -1zM222 496l27 -16 3 -2 -2 -2 -24 0 -10 3 -2 3 1 10 3 4 4 0zM705 496l2 -4 1 -8 -1 -4 -3 -2 -10 -2 -27 0 0 2 3 2 26 16 4 1 5 -1zM772 496l27 -16 2 -2 -1 -2 -24 0 -10 3 -2 3 1 10 3 4 4 0zM189 514l6 -6 3 -5 1 -5 -1 -8 -5 -8 -5 -2 -6 0 -4 2 -2 4 -2 10 0 10 2 4 6 5 4 0 3 -1zM739 514l9 -10 1 -6 -1 -6 -2 -6 -3 -4 -5 -2 -6 0 -4 2 -2 4 -2 8 0 12 4 6 4 3 4 0 3 -1zM140 518l1 -2 0 -4 -5 -6 -18 -10 -4 -1 -1 1 17 22 4 2 6 -2zM236 518l19 -20 2 -2 -1 -1 -11 3 -10 6 -5 4 -2 4 0 5 4 2 4 -1zM690 518l1 -6 -5 -6 -18 -10 -4 -1 -1 1 17 21 6 3 4 -2zM786 518l17 -18 3 -4 0 -1 -4 0 -7 3 -11 6 -4 4 -2 4 0 5 4 2 4 -1zM157 546l7 -4 3 -4 2 -4 -1 -4 -4 -4 -6 -3 -4 -1 -4 2 -2 2 -2 6 0 4 1 4 3 4 7 2zM219 544l2 -2 1 -4 -1 -10 -2 -4 -5 0 -4 1 -5 5 -1 2 0 4 3 4 5 4 4 1 3 -1zM707 546l7 -4 3 -4 2 -4 -2 -4 -3 -4 -6 -3 -4 -1 -4 2 -2 2 -1 4 -1 6 1 4 3 4 7 2zM769 544l2 -4 0 -12 -2 -4 -5 -1 -7 5 -3 3 -1 3 2 4 5 5 4 2 5 -1zM118 576l10 -6 10 -8 3 -6 0 -4 -2 -2 -5 -1 -6 4 -16 23 2 1 4 -1zM257 576l-19 -24 -4 -2 -5 0 -1 2 0 4 4 8 18 12 6 1 1 -1zM668 576l13 -8 7 -6 3 -6 -1 -4 -1 -2 -5 -1 -6 4 -16 23 2 1 4 -1zM806 576l-19 -24 -5 -3 -4 3 0 6 2 4 4 4 17 10 3 1 2 -1zM190 594l4 -3 3 -5 2 -8 0 -8 -2 -6 -5 -6 -4 -3 -4 -1 -5 2 -6 8 2 18 1 6 2 4 6 3 6 -1zM740 594l5 -4 2 -4 2 -8 0 -8 -2 -6 -5 -7 -4 -3 -4 -1 -5 3 -5 8 0 16 2 8 2 4 6 3 6 -1zM148 598l8 -4 2 -4 -2 -12 -1 -2 -3 -2 -4 1 -4 2 -24 17 -4 4 8 1 24 -1zM251 598l0 -2 -2 -2 -25 -17 -4 -2 -2 1 -2 2 -2 14 3 4 11 3 23 -1zM698 598l8 -4 2 -4 -2 -12 -2 -3 -2 -1 -4 1 -4 2 -25 17 -3 4 8 1 24 -1zM801 598l0 -2 -2 -2 -25 -17 -4 -1 -2 0 -2 2 -2 14 2 4 12 3 23 -1zM361 752l47 -9 44 -4 28 2 79 9 17 0 12 -2 10 -4 5 -4 20 -16 17 -16 14 -16 11 -16 10 -16 0 -6 -2 -4 -5 -4 -12 -6 -18 -6 -35 -8 -37 -2 -114 2 -108 -1 -27 1 -14 2 -24 6 -26 10 -9 6 -2 4 0 4 5 8 31 40 19 20 17 12 22 12 10 2 15 0zM137 636l3 -2 0 -2 0 -2 -3 -2 -13 -1 -9 1 5 4 8 4 4 1 5 -1zM157 646l4 -4 5 -8 0 -4 -3 -2 -6 0 -6 2 -3 2 -3 4 0 6 3 4 4 1 5 -1zM220 644l6 -9 12 1 8 -4 6 -4 -4 -2 -12 0 -7 2 -5 3 -9 -3 -7 1 -1 3 5 11 4 2 4 -1zM687 636l3 -2 0 -2 0 -2 -3 -2 -13 -1 -10 1 6 4 8 4 4 1 5 -1zM707 646l4 -4 5 -8 0 -4 -4 -2 -5 0 -6 2 -3 2 -3 4 0 6 3 4 4 1 5 -1zM770 644l6 -9 12 1 8 -4 6 -4 -6 -2 -10 0 -7 2 -5 3 -8 -3 -8 1 -1 1 0 2 5 10 4 3 4 -1zM188 670l8 -3 8 -5 3 -6 1 -6 -3 -6 -10 -10 -5 -3 -6 -1 -6 2 -5 6 -7 12 -1 6 4 6 8 6 5 2 6 0zM738 670l6 -2 9 -6 3 -4 1 -6 -1 -6 -9 -10 -7 -5 -6 -1 -6 2 -3 4 -8 12 -2 6 2 6 7 6 8 4 6 0zM124 684l8 -6 7 -8 2 -4 -2 -4 -3 -1 -5 3 -6 12 -2 6 1 2zM245 684l-1 -6 -8 -14 -3 -2 -3 0 -1 2 -1 4 2 4 10 10 4 3 1 -1zM677 682l5 -5 8 -9 0 -4 -2 -3 -2 0 -3 1 -4 4 -5 14 0 3 3 -1zM796 684l-2 -6 -8 -14 -2 -2 -4 0 -2 4 3 6 9 10 4 3 2 -1zM118 724l16 -10 32 -26 3 -6 -3 -6 -6 -4 -4 -1 -4 1 -3 2 -32 44 -3 6 2 1 2 -1zM256 724l-22 -30 -13 -20 -3 -2 -4 0 -8 5 -2 3 0 4 21 22 9 8 12 8 8 4 2 0 0 -2zM668 724l14 -9 34 -27 3 -6 -3 -6 -6 -4 -4 -1 -4 1 -3 2 -31 42 -3 8 3 0zM806 724l-22 -30 -13 -20 -3 -2 -4 0 -4 2 -5 4 -2 4 2 4 25 24 10 8 10 6 4 1 2 -1zM249 746l1 -2 -2 -2 -19 -14 -27 -26 -8 -6 -8 -2 -6 1 -4 3 -28 24 -26 20 -3 4 7 2 48 -2 75 0zM798 746l1 -2 -2 -2 -19 -14 -26 -26 -9 -6 -7 -2 -6 1 -4 3 -30 26 -24 18 -3 4 3 1 4 1 50 -2 72 0z"/>
<path fill="rgb(0, 0, 255)" d="M914 777l-78 -1 -144 2 -226 -3 -108 2 -76 -1 -140 2 -142 -2 -1 -10 1 -16 16 1 15 -1 9 -2 9 -4 34 -28 33 -35 1 3 -2 10 1 1 2 -1 4 -2 19 -20 2 -6 -1 -4 -2 -2 -10 -1 -5 -9 -5 -4 -12 -6 -17 -6 -25 -6 -16 -3 -17 -1 -33 0 -1 -10 1 -12 28 0 16 -2 10 -4 16 -8 20 -12 15 -12 18 -20 2 -4 1 -6 -1 -6 -2 -4 -13 -14 -14 -11 -20 -11 -22 -10 -13 -4 -19 -1 -22 0 -1 -11 1 -11 47 -1 22 -4 22 -6 15 -6 14 -8 5 -4 4 -10 9 -1 2 -1 3 -6 -3 -8 -18 -20 -4 -2 -2 1 0 3 1 8 -1 1 -15 -17 -14 -14 -37 -28 -9 -4 -10 -2 -15 -1 -16 1 -1 -14 1 -10 146 -3 152 3 52 -1 106 1 84 0 150 -3 156 3 68 -1 1 11 -1 12 -18 -1 -12 3 -12 6 -21 12 -21 18 -14 16 -20 24 0 -4 8 -18 0 -4 -6 3 -20 18 0 -5 10 -17 23 -27 2 -2 -1 -2 -16 6 -16 11 -25 23 -3 6 2 6 8 6 4 1 8 -2 1 1 1 6 2 6 4 2 6 0 3 8 5 6 26 12 17 6 19 4 24 2 32 1 1 11 -1 10 -22 0 -13 2 -24 8 -13 6 -22 14 -17 14 -10 10 -2 8 1 6 3 4 13 14 23 20 16 10 18 8 21 6 12 1 16 0 1 11 -1 10 -26 0 -25 2 -23 4 -24 8 -16 6 -6 4 -3 4 -3 7 -6 0 -4 2 -2 5 -1 4 2 4 -1 1 -3 -3 -3 -1 -8 0 -7 5 -3 6 3 6 25 24 20 14 11 4 1 -2 -1 -2 -25 -32 -6 -10 -3 -8 1 -1 18 16 8 5 0 -4 -7 -18 1 0 35 40 13 12 10 8 20 12 14 6 10 1 14 -1 1 14 -1 11zM597 450l37 -8 13 -4 13 -6 13 -8 7 -12 6 0 4 -2 2 -4 0 -4 -1 -4 -6 -8 -15 -15 -4 -1 -1 2 2 8 -1 2 -25 -26 -19 -16 -22 -16 -9 -4 -10 -2 -25 0 -82 8 -24 1 -48 -4 -39 -7 -13 -1 -9 1 -11 4 -12 6 -17 10 -10 8 -24 24 -19 24 -2 1 0 -3 6 -12 2 -8 0 -2 -2 0 -6 5 -16 15 -3 4 -1 4 0 5 2 4 4 2 6 0 4 11 6 5 14 7 20 8 26 6 17 2 21 1 96 -2 118 2 37 -1zM192 374l10 -6 26 -24 22 -14 4 -4 -8 -1 -64 1 -66 -2 0 2 2 2 28 20 30 24 8 3 8 -1zM742 374l12 -7 27 -25 18 -12 5 -4 -8 -1 -62 1 -60 -3 -9 1 0 2 3 2 26 18 32 26 6 3 10 -1zM161 398l6 -4 3 -5 0 -5 -2 -5 -13 -11 -29 -20 -14 -7 -2 -1 -2 2 38 54 8 3 7 -1zM221 398l3 -2 3 -4 1 -4 7 -12 26 -32 1 -3 -2 0 -8 2 -18 11 -13 10 -18 18 -1 2 0 4 6 7 6 4 7 -1zM711 398l7 -6 2 -4 0 -5 -3 -5 -33 -25 -16 -10 -8 -3 -2 2 4 6 34 48 4 2 4 1 7 -1zM256 448l-1 -2 -13 -8 -14 -3 -8 -9 -4 -1 -4 0 -2 -1 -2 -10 -4 -8 -10 -6 -8 -2 -9 2 -10 8 -3 8 0 10 -2 1 -6 -3 -6 0 -3 2 -5 8 -2 2 -12 0 -16 10 0 2 2 0 16 1 6 -1 10 -4 10 3 6 0 5 -1 5 -6 6 4 8 2 6 -2 12 -9 1 1 -1 8 1 2 3 1 4 1 12 -2 6 2 10 1 16 -1zM805 448l0 -2 -3 -2 -10 -6 -14 -2 -8 -10 -8 -1 -2 -2 -2 -9 -4 -8 -9 -6 -9 -2 -6 1 -4 1 -10 10 -3 8 1 11 -6 -4 -8 -1 -4 2 -4 8 -2 2 -8 -1 -6 2 -14 9 0 2 2 0 18 0 4 0 10 -4 10 3 6 1 5 -2 2 -2 1 -4 8 4 8 2 8 -3 10 -8 1 1 -1 8 1 2 3 1 6 1 10 -2 8 3 10 0 13 -1zM580 602l14 -2 6 -2 24 -12 16 -10 13 -10 13 -14 7 -8 3 -8 -1 -6 -2 -6 -11 -12 -12 -10 -28 -16 -18 -8 -13 -4 -29 -1 -112 5 -34 -1 -53 -5 -23 0 -11 2 -13 4 -16 6 -12 6 -16 10 -15 12 -12 12 -4 6 1 8 4 8 18 18 17 14 12 8 12 6 16 6 15 4 24 1 44 -4 46 -3 24 1 78 5 28 0zM155 498l3 -4 2 -10 -1 -4 -3 -2 -7 -2 -7 -1 -24 0 -6 1 5 4 27 16 6 2 5 0zM225 496l29 -18 1 -2 -9 -1 -18 0 -14 3 -2 2 0 2 3 14 5 2 5 -2zM704 498l4 -4 2 -8 -1 -6 -3 -2 -7 -2 -9 -1 -20 0 -7 1 4 4 27 16 6 2 4 0zM775 496l11 -7 15 -9 3 -2 1 -2 -9 -1 -18 0 -7 1 -7 2 -2 2 0 2 3 14 5 2 5 -2zM189 516l12 -8 1 -2 -2 -16 -3 -6 -3 -3 -6 -2 -6 0 -4 1 -2 2 -5 18 -3 6 2 4 10 6 4 1 5 -1zM739 516l13 -10 -2 -14 -2 -7 -3 -3 -7 -3 -6 0 -4 1 -2 2 -4 16 -4 8 0 2 2 2 12 7 7 -1zM140 520l2 -2 0 -6 -4 -6 -20 -12 -10 -4 -2 0 2 4 20 24 6 3 6 -1zM236 520l4 -3 20 -21 3 -4 -1 -1 -6 1 -10 4 -16 10 -3 6 -1 7 4 2 6 -1zM691 520l1 -4 0 -4 -4 -6 -18 -11 -12 -5 -1 2 1 2 20 24 6 3 7 -1zM786 520l24 -24 2 -4 0 -1 -4 0 -8 3 -15 8 -5 4 -4 6 0 7 4 2 6 -1zM161 546l8 -8 1 -4 -1 -4 -3 -4 -6 -4 -6 -1 -4 1 -3 2 -1 4 -1 6 1 8 2 3 4 2 4 1 5 -2zM221 546l2 -4 -1 -18 -4 -2 -6 1 -4 2 -5 5 -1 3 0 3 4 5 6 5 9 0zM711 546l5 -4 3 -4 1 -4 -1 -4 -3 -4 -6 -4 -6 -1 -4 1 -3 2 -2 4 0 8 1 6 2 3 4 2 6 0 3 -1zM770 546l2 -2 1 -2 -1 -18 -4 -2 -6 1 -4 2 -5 5 -1 3 0 3 8 8 4 2 6 0zM109 582l12 -6 17 -12 5 -8 -1 -6 -2 -2 -6 -1 -6 3 -22 32 3 0zM262 580l-24 -30 -6 -3 -4 1 -2 2 0 6 3 6 3 4 11 8 11 5 6 2 2 -1zM660 582l11 -6 17 -12 3 -4 1 -4 0 -4 -2 -4 -4 -1 -4 1 -5 4 -21 30 4 0zM812 580l-2 -4 -22 -26 -6 -3 -4 1 -2 2 1 8 5 8 20 13 8 2 2 -1zM186 596l8 -3 4 -5 2 -8 2 -16 -1 -2 -10 -8 -7 -2 -4 1 -11 7 -1 4 3 8 5 20 4 3 6 1zM737 596l6 -2 4 -4 3 -10 2 -14 -1 -4 -10 -8 -3 -2 -4 -1 -4 2 -11 7 -2 4 4 8 5 20 4 3 7 1zM127 600l23 -2 7 -2 2 -2 1 -2 0 -6 -2 -8 -2 -4 -4 -1 -6 1 -33 24 3 2 11 0zM255 598l-4 -4 -15 -10 -12 -9 -6 -1 -3 2 -4 16 1 2 2 2 5 2 11 1 18 1 7 -2zM678 600l22 -2 7 -2 2 -2 1 -4 -1 -6 -1 -6 -2 -4 -4 -1 -6 1 -34 24 3 2 13 0zM805 598l-4 -4 -13 -8 -14 -11 -6 -1 -3 2 -4 16 1 2 1 2 6 2 11 1 18 0 7 -1zM365 752l39 -8 30 -3 18 -1 24 1 84 10 16 -1 14 -2 12 -6 25 -20 15 -14 22 -25 2 -1 1 2 -2 8 1 3 6 -4 19 -19 1 -4 0 -4 -2 -4 -2 -1 -8 0 -7 -11 -15 -8 -24 -8 -30 -6 -28 -2 -136 1 -102 -1 -38 4 -24 6 -20 8 -12 6 -3 4 -3 7 -6 0 -4 2 -4 11 -6 -2 -6 1 -6 4 -4 5 0 4 2 3 26 25 16 12 8 4 6 2 2 -2 -1 -2 -27 -35 -8 -15 2 -2 18 17 6 4 2 -1 0 -2 -8 -18 0 -3 39 45 21 18 20 12 14 6 10 1 15 -1zM193 670l7 -3 6 -5 2 -5 2 -9 10 -2 8 -8 13 -2 15 -8 -3 -2 -7 0 -14 0 -8 2 -16 -1 -4 3 1 8 -1 1 -9 -7 -9 -3 -7 1 -7 4 -6 -6 -4 -1 -8 1 -8 2 -10 -3 -8 -1 -12 0 -5 2 17 9 12 1 2 1 4 7 4 2 6 0 6 -2 1 2 1 8 2 4 4 5 6 4 8 2 9 -1zM743 670l8 -4 4 -4 3 -6 2 -8 10 -2 8 -8 12 -2 16 -8 -3 -2 -7 0 -14 0 -8 2 -16 -1 -4 3 1 8 -1 1 -9 -7 -9 -3 -7 1 -7 4 -6 -6 -4 -1 -8 1 -8 2 -8 -3 -8 -1 -15 0 -4 2 17 9 12 1 2 1 4 7 4 2 6 0 8 -3 -1 7 2 6 5 7 10 6 6 0 7 -1zM112 730l19 -12 36 -28 3 -6 0 -4 -2 -4 -6 -5 -6 -1 -6 1 -5 3 -33 48 -4 8 4 0zM661 730l8 -4 13 -8 34 -28 4 -6 0 -4 -2 -4 -6 -4 -6 -2 -6 1 -4 3 -34 48 -3 6 0 2 2 0zM226 675l0 -3 1 2 -1 1zM137 748l39 -2 70 1 7 -1 -3 -4 -22 -16 -23 -24 -11 -7 -8 -2 -6 1 -4 2 -28 24 -32 26 0 2 2 0 19 0zM687 748l39 -2 68 1 9 -1 -3 -4 -22 -16 -24 -25 -10 -6 -8 -2 -7 1 -5 3 -28 25 -30 24 0 2 2 0 19 0z"/>
<path fill="rgb(0, 53, 255)" d="M760 776l-68 1 -214 -2 -120 1 -68 -1 -150 2 -140 -2 -1 -9 1 -16 16 1 12 0 8 -1 11 -4 27 -20 24 -21 6 -4 2 1 0 4 2 2 8 -3 1 1 -3 8 -12 18 -2 4 6 0 20 -11 28 -21 16 -13 2 -7 -2 -8 -4 -4 -6 -3 -13 -1 -4 -8 -3 -2 -8 -2 -8 -9 -4 -3 -19 -8 -22 -6 -31 -5 -48 -1 -1 -10 1 -12 36 0 16 -4 20 -10 20 -11 12 -9 14 -13 2 1 -22 32 9 -2 17 -9 15 -11 4 -6 3 -11 12 0 6 -2 6 -7 1 -6 -1 -6 -6 -6 -6 -3 -12 1 -3 -10 -4 -6 -15 -9 -16 -7 -8 -3 -2 1 15 18 5 8 0 2 -14 -11 -16 -10 -37 -17 -7 -2 -18 -2 -26 0 -1 -10 1 -11 52 -1 28 -6 22 -7 20 -10 10 -12 9 -3 3 -4 2 -6 2 -1 12 -1 6 -3 5 -5 1 -8 -2 -7 -12 -10 -22 -15 -16 -10 -13 -6 -5 -1 -2 1 19 28 -1 2 -6 -4 -4 -1 -2 7 -4 -2 -26 -20 -29 -20 -9 -3 -10 -2 -28 1 -1 -14 1 -10 142 -2 138 2 78 -1 116 2 214 -3 156 2 70 -1 1 11 -1 12 -20 -1 -5 1 -11 4 -32 18 -15 12 -15 14 -1 0 -1 -2 0 -4 -2 -1 -4 2 -16 10 0 -1 5 -8 22 -26 -1 -2 -10 3 -20 10 -16 11 -20 20 -2 6 2 6 5 6 5 2 10 3 4 7 4 4 6 2 8 10 20 11 18 6 21 5 29 3 32 0 1 11 -1 10 -27 0 -17 4 -18 6 -24 12 -34 25 0 -1 6 -8 17 -18 2 -4 -5 0 -8 2 -16 7 -10 6 -3 5 -5 10 -10 2 -4 2 -6 7 -2 5 2 5 6 7 4 2 10 2 5 12 4 6 11 7 14 8 10 3 2 -1 1 -1 -21 -26 -4 -6 2 -2 15 14 19 15 23 13 30 10 15 2 16 -1 1 11 -1 10 -34 0 -22 2 -22 4 -22 7 -20 9 -8 10 -8 2 -2 2 -4 7 -14 3 -6 6 -2 6 2 6 22 22 16 12 18 10 8 3 3 -1 -3 -6 -22 -28 -2 -4 0 -2 14 10 6 3 3 -1 1 -4 2 0 30 28 30 18 10 4 8 2 18 -1 1 13 -1 10 -62 -1 -92 1zM601 450l29 -6 18 -5 22 -11 4 -3 8 -10 6 -2 4 -2 4 -9 2 -1 12 0 8 -6 2 -3 2 -6 0 -4 -2 -4 -10 -9 -24 -17 -20 -12 -8 -4 -6 -1 -2 1 21 30 -1 2 -12 -7 -2 5 -2 1 -25 -19 -28 -20 -8 -4 -9 -2 -12 -1 -14 0 -80 8 -28 1 -42 -3 -41 -7 -17 -1 -11 1 -6 2 -27 14 -18 12 -22 20 -1 0 -1 -6 -4 0 -18 12 0 -2 1 -2 25 -32 0 -1 -4 0 -10 3 -16 9 -13 9 -9 7 -12 13 -4 6 1 6 5 7 5 3 11 2 6 10 8 3 6 9 4 4 28 12 12 4 18 4 15 2 27 1 98 -1 126 1 31 -1zM190 376l6 -2 8 -5 9 -7 18 -18 27 -18 -3 -2 -5 0 -78 1 -54 -2 -7 1 5 5 30 21 28 23 7 3 9 0zM739 376l9 -3 8 -5 28 -26 23 -16 -2 -2 -7 0 -74 1 -56 -2 -7 1 4 4 38 28 21 17 7 3 8 0zM246 450l8 0 7 -2 -5 -4 -14 -8 -14 -4 -6 -7 -10 -5 -4 -12 -4 -5 -8 -5 -10 -2 -10 2 -6 4 -5 6 -5 12 -12 3 -8 9 -15 4 -14 8 -4 4 9 1 14 0 16 -3 16 2 12 -3 12 2 12 -4 2 0 2 3 6 2 14 0 14 2 10 0zM799 450l11 -2 -1 -2 -17 -10 -14 -4 -7 -8 -9 -4 -7 -16 -9 -6 -8 -2 -10 1 -8 5 -6 8 -4 11 -12 2 -8 9 -16 4 -16 10 -1 2 7 1 16 0 16 -3 16 2 12 -3 12 2 12 -3 10 4 14 0 14 2 13 0zM586 602l16 -4 26 -13 21 -13 19 -16 0 2 -5 8 -15 20 2 2 2 0 13 -6 19 -12 6 -5 3 -5 3 -11 14 0 6 -4 4 -5 1 -4 -1 -8 -4 -5 -5 -3 -15 -1 -3 -9 -3 -5 -12 -8 -16 -8 -10 -3 -4 0 18 22 4 7 -20 -15 -16 -9 -28 -13 -12 -4 -19 -2 -15 0 -88 5 -26 0 -96 -6 -13 1 -10 2 -30 10 -18 10 -17 11 -16 13 -2 0 8 -10 17 -18 1 -2 -6 0 -8 2 -14 6 -12 7 -3 5 -5 10 -10 3 -4 1 -5 6 -2 4 0 6 5 6 6 4 10 3 5 11 3 5 18 12 16 6 4 1 1 -2 -21 -27 -3 -5 1 -1 25 21 17 12 20 10 25 8 23 1 54 -4 40 -2 102 5 34 0zM159 498l5 -18 -3 -2 -13 -3 -19 -1 -19 0 -1 2 35 22 10 2 5 -2zM703 500l5 -1 2 -3 4 -16 -3 -2 -15 -3 -17 -1 -18 0 -2 2 33 21 6 3 5 0zM225 498l15 -10 18 -10 1 -2 -7 -2 -22 1 -13 1 -9 2 -1 2 3 6 2 12 2 1 4 1 7 -2zM768 500l8 -2 11 -8 21 -12 2 -2 -10 -2 -22 1 -20 3 -1 2 3 6 3 12 5 2zM190 518l15 -6 3 -4 0 -6 -4 -4 -4 -14 -2 -3 -8 -3 -11 0 -5 2 -2 2 -2 14 -5 6 -1 5 2 4 4 3 12 5 8 -1zM739 518l7 -3 8 -2 3 -3 1 -6 -4 -6 -5 -16 -8 -4 -12 0 -5 2 -2 2 -2 14 -5 6 -1 4 2 5 4 3 12 5 7 -1zM240 546l-12 -2 -2 -2 -1 -4 0 -8 1 -4 2 -2 13 -2 -1 10 1 12 -1 2zM790 547l-12 -3 -2 -1 -1 -9 1 -9 15 -3 -2 12 3 12 -2 1zM142 545l-14 1 -2 -2 1 -10 0 -10 1 -1 15 1 0 16 -1 5zM692 545l-14 0 -1 -1 -1 -20 2 -2 14 2 1 6 0 12 -1 3zM192 596l5 -2 2 -2 4 -16 5 -8 0 -4 -2 -6 -2 -2 -6 -1 -10 -5 -6 0 -12 5 -4 3 -2 5 0 4 6 9 2 16 2 2 10 3 8 -1zM742 596l7 -4 5 -19 4 -5 0 -5 -2 -5 -2 -2 -6 -1 -10 -5 -6 0 -14 6 -4 6 0 4 6 9 2 17 2 2 10 3 8 -1zM143 600l12 -2 7 -2 2 -2 -4 -18 -3 -4 -7 -1 -6 2 -32 23 -3 2 0 2 9 1 25 -1zM256 600l3 -2 -1 -2 -19 -12 -13 -10 -4 -2 -4 -1 -4 1 -2 2 -2 12 -3 8 1 2 18 4 30 0zM694 600l11 -2 7 -2 2 -2 -4 -18 -3 -4 -7 -1 -6 2 -33 23 -2 2 -1 2 8 1 28 -1zM806 600l3 -2 -2 -2 -21 -14 -10 -8 -8 -3 -3 1 -2 2 -3 14 -3 6 1 2 18 4 30 0zM369 752l37 -7 46 -4 26 1 82 9 12 0 13 -1 8 -2 11 -6 22 -18 26 -22 2 -1 2 1 0 4 2 2 10 -4 0 2 -2 4 -16 26 4 0 10 -4 14 -9 38 -28 5 -7 1 -8 -2 -5 -4 -3 -8 -4 -10 1 -2 -2 -4 -7 -2 -2 -10 -3 -8 -9 -22 -10 -41 -10 -16 -2 -31 0 -122 1 -100 -1 -32 2 -32 7 -28 11 -6 4 -6 8 -7 2 -3 2 -4 7 -12 2 -6 5 -3 4 -1 4 1 4 18 20 21 16 18 10 8 3 3 -1 -3 -6 -18 -23 -6 -9 0 -2 16 12 4 1 2 -1 0 -4 2 -2 21 20 12 10 18 12 15 8 16 4 21 -2zM193 672l11 -5 4 -5 4 -10 2 -2 8 -3 6 -6 16 -4 16 -9 -1 -2 -21 -1 -16 2 -13 -1 -11 5 -12 -3 -12 2 -12 -4 -16 2 -12 -2 -26 0 0 2 16 9 16 4 8 9 12 1 6 13 8 6 8 3 11 -1zM743 672l7 -3 5 -3 3 -4 4 -10 2 -2 7 -2 8 -8 13 -3 14 -7 4 -2 0 -2 -22 -1 -16 2 -13 -1 -11 5 -12 -3 -12 2 -12 -4 -16 2 -14 -2 -24 0 0 2 16 9 16 4 8 9 12 1 6 13 8 6 8 2 11 0zM254 748l3 -2 -1 -2 -23 -16 -24 -26 -13 -8 -10 -2 -10 1 -6 4 -30 27 -26 20 -2 4 6 2 58 -3 78 1zM803 748l4 -2 -1 -2 -24 -17 -23 -25 -13 -8 -10 -2 -8 1 -7 3 -29 26 -28 22 -3 4 9 2 54 -3 79 1z"/>
<path fill="rgb(0, 111, 255)" d="M644 354l-6 -2 -39 -26 -11 -4 -8 -1 -20 -1 -86 9 -24 0 -40 -2 -39 -7 -21 -2 -13 2 -11 4 -26 14 -20 13 -10 0 -6 2 -2 -1 11 -14 2 -4 -1 -1 -4 0 -8 2 -22 9 -2 1 -1 -1 7 -6 15 -10 3 -2 -1 -2 -1 0 -90 0 -62 -2 -1 2 2 2 12 10 -1 1 -20 -6 -9 -1 1 2 8 10 2 4 0 2 -6 1 -2 5 -6 -2 -32 -22 -11 -6 -7 -2 -14 -2 -24 1 -1 -15 1 -7 126 -2 136 2 94 -1 118 1 214 -2 144 2 82 -1 1 10 -1 11 -16 -1 -17 4 -28 14 -21 14 -4 1 -15 1 2 -4 10 -12 1 -2 -2 -2 -10 2 -24 10 -4 0 8 -6 15 -10 2 -2 0 -2 -1 0 -86 0 -60 -2 -6 0 -2 2 12 10 2 2 0 1 -22 -7 -7 0 1 2 10 12 1 4 -1 1 -6 0 -2 5zM196 394l-22 0 1 -10 1 -5 4 -1 18 -1 0 15 0 2 -2 0zM746 394l-20 1 -2 -1 1 -12 1 -3 22 -2 1 1 -1 6 0 8 -1 2 -1 0zM652 497l-49 -21 -20 -4 -29 0 -104 4 -42 -1 -32 -3 -26 -1 -16 1 -17 4 -21 7 -22 10 -1 -1 4 -6 -1 -2 -4 0 -10 2 -24 9 -1 -1 4 -4 23 -14 -3 -2 -19 0 -16 0 -26 4 -14 -2 -14 1 -28 -3 -36 -1 -4 1 1 2 21 14 2 2 0 1 -26 -10 -8 -1 -4 0 11 12 0 2 -1 1 -42 -19 -11 -4 -17 -2 -30 0 -1 -12 1 -8 30 0 25 -2 27 -5 20 -6 18 -8 4 -3 8 -10 10 -4 6 -9 6 -2 9 1 -2 8 -3 6 -12 3 -8 10 -14 2 -22 15 5 2 21 0 18 -2 16 1 12 -2 12 1 12 -2 10 3 14 0 24 2 16 -1 4 -2 -2 -2 -20 -12 -14 -3 -8 -10 -8 -3 -2 -4 -1 -8 1 -2 2 0 6 1 6 9 9 4 7 10 4 3 36 13 32 6 32 2 96 -2 112 2 38 -1 13 -1 27 -5 18 -5 12 -5 8 -4 4 -3 8 -10 10 -4 6 -9 2 -1 8 -1 4 1 1 2 -5 12 -12 3 -7 9 -15 3 -22 15 5 2 19 0 20 -2 16 1 12 -2 12 1 10 -2 12 3 14 0 22 2 17 -1 5 -2 -4 -3 -18 -11 -14 -3 -8 -9 -8 -4 -3 -6 0 -6 1 -2 4 0 4 1 6 9 9 4 7 10 4 3 12 5 20 7 20 5 34 3 32 1 1 6 -1 13 -22 0 -18 3 -26 8 -26 12 -1 0 5 -8 0 -2 -4 0 -8 1 -24 9 -3 0 4 -4 21 -12 2 -2 -3 -2 -35 0 -28 4 -12 -2 -14 1 -28 -3 -36 -1 -4 1 1 2 21 14 -2 2 -22 -9 -12 -1 11 12 1 2 0 1zM166 494l-2 0 0 -3 2 -4 2 0 0 5 -2 2zM716 494l-1 -2 1 -4 2 2 -2 4zM678 494l-4 -2 2 -2 2 2 0 2zM162 517l-10 0 -4 -1 -5 -12 1 -2 14 0 3 4 2 8 1 2 -2 1zM218 517l-8 0 -2 -1 4 -10 2 -3 2 0 9 -1 0 2 -2 8 -3 4 -2 1zM712 517l-10 0 -4 -1 -5 -12 1 -2 14 1 2 1 3 8 1 4 -2 1zM770 516l-6 1 -4 0 -1 -1 1 -6 3 -6 3 -1 8 -1 1 2 0 2 -5 10zM200 550l-14 -2 -16 2 -2 -2 4 -8 1 -8 -5 -12 2 -1 16 2 12 -3 6 2 0 2 -5 8 0 4 1 6 4 8 -4 2zM750 550l-14 -2 -16 1 -1 -1 3 -8 1 -6 -1 -6 -3 -8 1 -1 16 2 12 -2 6 1 -5 10 0 4 0 4 5 10 -4 2zM136 542l-4 0 -2 -2 -1 -2 1 -10 2 -2 6 0 2 1 1 3 -1 10 -4 2zM686 542l-4 0 -2 -4 0 -10 4 -2 4 0 2 1 1 3 -1 10 -4 2zM236 541l-2 1 -4 -1 -3 -3 0 -8 3 -3 4 -1 3 2 0 6 -1 7zM786 541l-6 1 -3 -4 0 -8 3 -3 4 -1 3 2 0 10 -1 3zM158 568l-12 1 -3 -1 3 -12 4 -4 12 0 2 2 -4 12 -2 2zM224 569l-6 0 -4 -2 -4 -7 -1 -8 7 0 5 2 4 12 0 2 -1 1zM708 568l-8 1 -7 -1 3 -12 2 -3 4 -2 6 1 4 0 1 2 -3 12 -2 2zM774 569l-10 -1 -4 -8 -1 -8 7 -1 5 3 4 12 0 2 -1 1zM766 666l-4 0 -2 -2 1 -6 3 -4 8 -3 8 -9 16 -3 18 -10 1 -3 -11 -2 -16 0 -16 2 -14 -1 -12 3 -10 -1 -12 1 -12 -2 -14 1 -28 -2 -18 1 2 2 18 11 4 2 12 1 8 9 12 2 2 3 3 8 -2 2 -7 1 -6 -2 -6 -8 -10 -3 -10 -11 -8 -4 -26 -8 -39 -7 -37 -1 -122 1 -96 -1 -22 1 -19 2 -27 5 -30 11 -4 3 -6 8 -10 4 -5 7 -5 2 -4 -1 -1 -1 1 -6 2 -4 8 -3 8 -9 12 -1 4 -2 18 -10 1 -3 -11 -2 -16 0 -16 2 -14 -1 -12 3 -10 -1 -12 1 -12 -2 -14 1 -24 -2 -14 0 -8 1 1 2 19 11 16 3 8 9 12 2 2 3 3 8 -1 2 -8 0 -6 -1 -6 -8 -10 -3 -10 -11 -12 -6 -27 -7 -34 -6 -49 -1 -1 -11 1 -9 28 0 12 -1 9 -2 17 -8 36 -18 -1 4 -11 12 0 2 4 0 8 -2 26 -11 0 1 -4 4 -19 14 -1 2 8 2 34 -2 26 -3 14 1 12 -1 28 3 24 1 13 -1 1 -2 -2 -2 -21 -14 -4 -4 1 -1 22 10 12 3 2 0 3 -2 -4 -8 1 -1 22 12 14 5 20 6 13 2 17 0 52 -5 36 -1 110 5 20 0 12 -1 14 -4 46 -23 1 1 -1 2 -10 12 0 2 6 0 6 -2 23 -10 3 0 -24 20 4 2 34 -1 30 -4 14 1 12 -1 28 4 26 0 11 -1 1 -2 -2 -2 -18 -12 -7 -6 1 -1 22 10 12 3 4 -2 -4 -8 0 -2 24 13 26 9 21 4 21 0 1 10 -1 9 -36 1 -25 2 -17 3 -16 4 -26 10 -8 9 -10 5 -5 7 -5 2zM168 585l-2 1 -2 -4 2 -4 2 3 0 4zM716 587l-2 -7 0 -2 2 -1 2 7 0 2 -2 1zM198 690l-18 0 -4 -1 -2 -14 2 -1 20 1 2 2 0 13zM748 690l-18 0 -4 -1 -1 -3 -1 -11 2 -1 20 0 2 2 0 14zM716 776l-238 -2 -120 2 -76 -1 -142 1 -120 -1 -20 0 -1 -11 1 -13 24 1 14 -2 7 -2 10 -6 33 -24 6 -3 2 7 5 0 1 2 -4 8 -6 8 1 2 9 -1 16 -7 2 0 -12 12 -1 2 1 2 10 1 58 -3 74 1 10 -1 2 -2 -2 -2 -22 -16 2 -2 22 11 8 2 4 0 1 -1 0 -2 -11 -16 0 -3 2 0 6 1 4 -1 4 2 22 15 20 12 14 6 14 2 23 -2 37 -7 42 -3 22 1 86 9 20 -1 8 -1 11 -4 41 -30 4 -1 2 5 6 2 1 2 -5 8 -5 6 -1 3 2 1 8 -2 16 -6 1 2 -11 10 -1 2 1 2 12 1 54 -3 82 1 5 -1 1 -2 -24 -18 2 -1 24 10 6 2 4 0 1 -1 0 -2 -11 -16 -1 -2 1 -2 16 3 25 17 17 10 14 6 10 2 18 -1 1 9 -1 14 -78 -2 -120 2z"/>
<path fill="rgb(0, 169, 255)" d="M832 344l-6 0 0 -2 5 -12 -3 -1 -14 1 2 -6 -8 -2 -74 1 -78 -2 -4 1 1 4 -1 1 -16 -1 -2 2 8 10 1 2 -9 4 -6 -2 -31 -18 -20 -4 -21 0 -82 8 -24 1 -42 -3 -36 -6 -22 -2 -8 0 -13 4 -39 20 -8 2 -6 0 -1 -2 6 -10 0 -2 -5 -1 -13 1 3 -3 0 -3 -6 -2 -80 1 -74 -2 -4 1 1 4 -1 2 -14 -2 -2 0 -2 2 8 10 0 2 -4 1 -2 3 -2 1 -10 -5 -23 -14 -11 -4 -18 -2 -22 1 -1 -15 1 -7 126 -1 136 1 96 -1 116 2 206 -3 154 2 80 -1 1 10 -1 11 -18 -1 -11 2 -15 6 -32 16 -6 2zM192 392l-10 1 -4 -1 -2 -6 2 -5 6 -2 10 1 1 2 1 6 -1 2 -3 2zM742 392l-10 1 -4 -1 -2 -4 1 -6 5 -3 11 1 2 2 0 6 -1 3 -2 1zM156 416l-6 1 -5 -1 3 -7 4 -4 6 1 2 2 -2 6 -2 2zM706 416l-6 2 -4 -2 1 -6 3 -4 4 -1 5 1 1 2 -1 4 -3 4zM220 416l-4 0 -2 -3 0 -5 2 -1 3 1 3 4 0 3 -2 1zM772 416l-2 1 -4 -2 -2 -3 0 -4 2 -1 3 1 3 8zM136 429l-6 0 -2 -1 0 -2 3 -4 3 -3 6 -1 2 2 -1 4 -3 4 -2 1zM686 429l-6 0 -2 -1 1 -2 2 -4 3 -3 6 -1 2 2 0 2 -2 4 -4 3zM238 428l-4 1 -4 -1 -3 -4 0 -4 3 -1 4 1 3 4 1 4zM786 429l-6 -1 -4 -8 4 -1 4 1 4 6 0 2 -2 1zM640 489l-38 -14 -18 -3 -26 -1 -108 5 -34 -1 -66 -5 -19 2 -45 12 -6 -3 -14 0 -1 -1 4 -4 -2 -2 -7 -1 -34 1 -30 2 -90 -4 -6 2 5 6 -1 0 -16 -1 -5 1 7 8 -2 1 -33 -13 -9 -3 -18 -2 -28 1 -1 -12 1 -8 38 0 14 -1 52 -10 1 1 -7 6 2 2 30 1 18 -2 15 1 13 -2 20 0 12 2 14 0 14 1 20 0 12 -1 3 -2 1 -4 37 6 27 2 108 -1 138 1 27 -2 45 -9 1 1 -7 6 1 2 33 0 16 -1 16 1 12 -2 20 0 12 2 14 0 26 1 20 -1 3 -2 -1 -2 2 -1 38 5 24 2 30 0 1 6 -1 13 -18 0 -15 1 -43 12 -3 0 -5 -3 -14 0 -1 -1 4 -4 -2 -2 -7 -1 -32 0 -32 3 -88 -4 -8 2 5 6 -1 1 -16 -2 -5 1 8 8 -1 1zM158 515l-4 0 -4 -1 -3 -6 1 -3 6 -1 4 2 2 6 -2 3zM708 514l-4 1 -4 -1 -3 -6 1 -3 6 -1 4 2 2 6 -2 2zM218 514l-4 0 -1 -4 3 -4 4 -1 1 1 1 2 -2 4 -2 2zM768 514l-4 0 -1 -4 3 -4 4 -1 2 3 -1 2 -3 4zM196 546l-18 0 -4 -2 0 -20 4 -2 16 0 4 2 -1 10 1 8 0 2 -2 2zM744 546l-16 0 -4 -2 0 -20 4 -2 16 0 4 2 -1 10 1 9 -2 3 -2 0zM138 538l-4 1 -2 -2 0 -5 2 -3 4 1 1 4 -1 4zM688 538l-4 1 -2 -2 0 -5 2 -3 4 1 1 2 -1 6zM782 538l-2 -1 -1 -3 1 -3 2 -1 2 0 1 4 -1 4 -2 0zM232 538l-2 -1 -1 -3 1 -3 2 -1 2 1 1 3 -1 3 -2 1zM154 567l-6 -1 -1 -2 1 -6 4 -4 6 0 2 4 -2 6 -4 3zM704 567l-6 -1 -1 -4 1 -5 2 -2 6 -1 4 2 0 4 -2 4 -4 3zM220 565l-4 -1 -2 -2 -1 -4 1 -3 4 0 2 2 2 5 -2 3zM770 565l-4 0 -2 -3 -1 -4 1 -3 4 0 2 2 1 5 -1 3zM654 632l-6 0 -45 -8 -41 -1 -120 1 -106 -1 -19 1 -43 5 -2 -1 -1 -2 -15 -2 -22 0 -12 1 -14 0 -12 2 -20 0 -12 -2 -18 1 -14 -2 -24 0 -11 2 7 6 -2 0 -49 -8 -53 -1 -1 -9 1 -11 22 1 21 -2 13 -4 34 -14 1 0 -1 2 -7 8 1 1 4 1 16 -3 1 1 -5 6 2 2 2 0 24 0 32 -3 36 -1 32 3 32 1 8 -2 1 -2 -4 -4 1 -2 14 1 3 -1 3 -3 41 13 21 2 19 0 51 -4 32 -1 110 5 18 0 16 -2 7 -2 37 -16 1 2 -6 8 3 2 18 -3 2 1 -7 6 3 2 26 0 46 -3 22 -1 32 3 28 1 12 -2 1 -2 -4 -4 1 -2 14 1 2 -1 2 -3 2 0 41 13 15 2 22 0 1 8 -1 11 -47 1 -43 5 -2 0 -1 -3 -9 -2 -8 0 -20 0 -12 1 -14 0 -12 2 -20 0 -12 -2 -16 1 -30 -2 -14 0 -7 2 7 6zM142 652l-4 1 -5 -1 -4 -4 0 -4 5 -1 4 2 3 3 1 4zM232 652l-5 0 1 -4 4 -4 5 0 1 2 -1 2 -5 4zM690 653l-4 0 -4 -2 -3 -5 0 -2 5 -1 4 2 3 5 1 2 -2 1zM782 652l-5 0 1 -4 4 -4 5 0 1 2 -1 2 -5 4zM158 664l-4 1 -4 -2 -3 -3 -1 -4 4 -2 6 1 2 2 1 3 1 2 -2 2zM218 663l-4 -1 0 -4 2 -2 4 -1 2 1 0 2 -2 3 -2 2zM708 664l-4 1 -4 -1 -3 -4 -1 -5 6 -1 6 2 1 6 -1 2zM768 663l-4 -1 0 -4 2 -3 4 -1 2 2 -2 5 -2 2zM192 688l-12 0 -3 -4 0 -6 1 -1 4 -1 8 0 4 1 1 3 0 4 -1 3 -2 1zM742 688l-10 0 -4 -1 -1 -3 0 -6 1 -2 4 0 8 0 4 1 1 3 0 4 -1 3 -2 1zM914 775l-78 -1 -150 2 -208 -2 -118 1 -70 -1 -150 2 -108 -1 -32 -1 -1 -10 1 -12 22 1 19 -3 10 -4 27 -18 6 -2 4 4 4 2 -8 12 4 2 12 -1 2 1 0 4 6 1 70 -2 82 1 6 -2 -1 -6 11 1 5 -1 -1 -4 -4 -10 4 -2 6 1 43 23 12 4 9 1 13 -1 53 -9 36 -2 20 1 82 8 26 0 11 -2 9 -4 28 -18 6 -2 4 3 4 2 0 1 -6 10 -1 2 1 1 14 0 2 1 0 4 4 1 76 -2 76 1 8 -2 -1 -6 11 1 4 -1 0 -4 -5 -10 1 -2 2 0 10 2 32 18 14 6 12 3 18 -1 1 12 -1 9z"/>
<path fill="rgb(0, 226, 255)" d="M844 336l-6 1 -2 -1 1 -8 -2 -2 -11 -1 -7 -3 -5 0 -86 1 -76 -3 -8 3 -15 1 0 2 5 6 -1 2 -7 2 -25 -12 -7 -2 -14 -2 -22 0 -84 7 -22 1 -42 -3 -45 -7 -13 -1 -9 1 -8 2 -37 16 -6 1 -4 -1 1 -6 -1 -3 -12 -2 -8 -3 -94 1 -64 -3 -7 0 -9 3 -14 1 -1 0 0 2 4 6 0 2 -4 2 -3 0 -6 -2 -16 -9 -10 -3 -18 -3 -24 1 -1 -14 1 -7 32 0 110 -1 138 2 88 -2 106 2 204 -2 156 2 80 -2 1 10 -1 10 -18 -1 -12 3 -40 16zM190 390l-6 1 -4 -1 -1 -2 1 -4 4 -3 7 1 2 4 0 2 -3 2zM740 390l-6 1 -4 -1 -1 -2 0 -4 2 -2 3 -1 7 1 2 4 -1 2 -2 2zM152 414l-2 -2 1 -2 3 -2 2 1 0 2 -2 3 -2 0zM702 414l-2 -2 0 -2 2 -2 2 0 2 2 0 2 -2 2 -2 0zM136 425l-2 -1 2 -2 0 3zM686 425l-2 -1 2 -2 0 3zM626 482l-26 -8 -24 -3 -126 4 -42 -1 -58 -4 -22 2 -34 7 -16 -2 -5 -3 -13 -2 -32 1 -34 2 -94 -3 -4 0 -4 4 -14 0 -2 2 0 3 -2 0 -22 -7 -10 -2 -20 -1 -22 0 -1 -11 1 -7 45 -1 45 -6 2 2 1 2 15 1 40 -1 16 1 12 -2 18 0 14 2 46 1 12 -1 18 -3 54 4 106 -1 116 2 35 -1 45 -6 3 4 15 1 40 -1 16 1 12 -2 18 0 14 2 48 1 26 -4 44 4 38 0 1 8 -1 10 -18 0 -10 1 -42 8 -16 -2 -5 -3 -11 -2 -34 1 -34 2 -88 -3 -9 0 -5 4 -14 0 -2 2 1 2 -1 2zM154 512l-2 0 -2 -2 0 -2 2 -1 2 0 2 2 0 2 -2 1zM704 512l-2 0 -1 -2 0 -2 1 -1 2 0 2 2 0 2 -2 1zM190 544l-10 0 -3 -2 -1 -4 0 -8 2 -5 10 -1 6 2 2 4 -1 10 -1 3 -4 1zM740 544l-10 0 -3 -2 -1 -10 0 -4 2 -3 4 -1 6 0 4 0 2 2 2 4 -1 10 -1 2 -4 2zM154 563l-2 0 -2 -1 0 -2 2 -3 2 0 2 1 0 2 -2 3zM704 563l-2 0 -2 -1 0 -2 2 -3 2 0 2 1 0 2 -2 3zM640 628l-38 -4 -40 -2 -120 2 -104 -1 -54 3 -14 -2 -16 -1 -46 1 -14 2 -30 -2 -16 1 -12 -1 -28 0 -12 0 -5 2 0 2 -3 0 -40 -5 -48 -1 -1 -8 1 -10 28 0 16 -2 10 -2 22 -8 0 4 1 2 13 0 2 1 3 3 9 1 90 -4 36 3 34 0 10 -2 4 -2 16 -3 41 9 15 1 100 -6 102 5 26 0 19 -2 29 -9 0 3 1 2 13 0 2 1 2 3 8 1 94 -4 33 3 31 0 8 0 7 -2 3 -2 14 -4 43 10 29 0 1 8 -1 11 -36 0 -44 3 -14 -2 -18 -1 -44 1 -14 2 -32 -2 -14 1 -14 -1 -30 0 -9 0 -4 2 0 2 -1 0zM156 660l-2 2 -2 -1 -1 -3 3 -1 2 3zM704 662l-3 -2 -1 -2 2 -1 3 1 1 2 -2 2zM190 686l-8 0 -2 -2 -1 -4 3 -2 8 1 2 1 1 2 -1 2 -2 2zM740 686l-8 0 -2 -2 -1 -4 3 -2 8 0 2 2 1 2 -1 2 -2 2zM914 775l-78 -1 -154 1 -204 -2 -120 2 -76 -1 -144 1 -106 0 -32 -1 -1 -10 1 -12 22 1 20 -3 7 -2 19 -11 6 -2 6 3 1 2 -3 6 0 2 14 1 7 3 9 0 70 -2 86 0 22 -5 1 -3 -1 -6 1 -2 3 0 12 4 30 14 7 2 11 1 17 -1 49 -8 38 -2 20 1 80 8 22 0 10 -1 12 -4 22 -12 6 -1 6 3 -4 8 0 2 4 1 10 0 10 3 80 -3 78 2 7 -1 9 -3 8 -1 3 -2 -2 -8 1 -2 2 0 10 2 29 14 12 4 11 1 14 -1 1 12 -1 9z"/>
<path fill="rgb(0, 255, 204)" d="M848 332l-4 0 -2 -2 1 -4 -4 -2 -27 -3 -88 1 -76 -3 -26 3 0 2 1 4 0 2 -3 1 -6 -1 -19 -8 -21 -3 -18 0 -86 7 -20 1 -42 -3 -41 -6 -17 -1 -11 1 -8 2 -25 10 -10 2 -2 0 -2 -6 -3 -2 -23 -3 -94 1 -66 -3 -32 2 -2 1 1 8 -3 1 -6 -1 -16 -7 -13 -3 -17 -1 -18 1 -1 -14 1 -6 32 -1 104 0 144 1 78 -1 116 1 206 -1 154 1 80 -1 1 9 -1 10 -14 -1 -11 1 -41 14zM186 388l-2 0 -1 -2 1 -2 4 0 1 2 -3 2zM736 388l-2 0 -1 -2 1 -2 4 0 1 2 -3 2zM854 476l-8 1 -34 -5 -34 0 -34 2 -94 -3 -26 3 -8 3 -21 -5 -23 -2 -122 4 -100 -4 -12 0 -40 7 -34 -5 -36 0 -34 2 -90 -3 -30 3 -8 3 -28 -6 -18 -1 -20 1 -1 -11 1 -7 48 -1 34 -3 10 2 14 1 42 -2 16 1 28 -1 16 1 14 0 18 1 26 0 22 -2 54 3 102 -1 124 1 32 -1 32 -3 10 2 13 1 87 -2 16 2 48 0 30 -2 44 2 34 1 1 9 -1 8 -24 0 -36 6zM190 542l-8 0 -4 -2 -1 -8 1 -4 2 -2 8 0 5 2 1 4 0 6 -2 3 -2 1zM738 542l-6 0 -4 -2 -1 -4 0 -6 4 -4 7 0 5 2 1 4 0 6 -2 3 -4 1zM852 624l-16 1 -20 -2 -22 0 -38 1 -14 1 -28 -1 -16 0 -44 -1 -16 1 -8 2 -32 -3 -26 -1 -130 1 -96 -1 -60 3 -32 -2 -46 0 -14 2 -30 -1 -16 0 -40 -1 -19 1 -9 2 -38 -3 -42 -1 -1 -8 1 -10 36 0 13 -2 17 -4 8 2 30 4 90 -4 34 2 36 1 36 -5 32 6 20 1 62 -4 38 -1 124 5 20 -2 20 -5 6 2 28 4 94 -4 34 2 32 1 15 -1 23 -4 36 6 30 1 1 9 -1 8 -28 0 -34 2zM186 684l-3 -2 1 -1 2 0 2 1 -2 2zM736 684l-2 0 -1 -2 1 -1 2 0 2 1 -2 2zM914 775l-90 -2 -142 2 -204 -2 -120 2 -76 -2 -148 2 -96 -1 -38 0 -1 -10 1 -11 20 1 18 -2 10 -3 20 -8 4 1 0 8 2 1 30 2 74 -3 86 1 25 -3 3 -2 1 -6 3 -1 8 2 33 13 13 2 20 -2 44 -7 40 -2 18 1 84 7 18 1 20 -3 20 -9 6 -1 3 1 -1 8 2 1 26 2 82 -3 80 1 27 -3 3 -2 1 -6 3 -1 10 3 31 12 11 2 16 -1 1 11 -1 9z"/>
<path fill="rgb(0, 255, 102)" d="M860 326l-8 1 -4 -3 -4 -2 -28 -2 -92 1 -78 -3 -28 1 -2 1 0 4 -4 2 -23 -6 -21 -2 -116 8 -38 -2 -43 -6 -21 -1 -14 1 -26 8 -6 1 -4 0 -2 -3 -4 -1 -26 -3 -88 1 -82 -3 -30 1 -2 1 -1 4 -3 2 -16 -5 -14 -2 -14 -1 -18 1 -1 -13 1 -6 40 -1 92 0 118 2 100 -2 124 2 200 -2 124 2 116 -2 1 9 -1 9 -14 0 -12 1 -28 8zM858 474l-10 0 -34 -3 -36 1 -36 2 -92 -4 -28 2 -10 2 -24 -3 -18 -1 -122 3 -98 -4 -14 1 -34 4 -36 -3 -38 1 -36 2 -92 -4 -40 3 -30 -3 -30 0 -1 -10 1 -7 42 0 32 -2 32 1 42 -1 16 1 28 -1 14 1 42 1 44 -2 50 2 102 -1 124 1 56 -2 26 1 48 -1 16 1 28 -1 14 1 34 1 52 -2 40 2 32 0 1 9 -1 8 -28 0 -28 4zM188 540l-6 0 -2 -2 -1 -6 3 -4 6 0 3 2 1 6 -2 3 -2 1zM738 540l-4 1 -4 -3 -1 -6 3 -4 6 0 3 2 1 6 -2 3 -2 1zM744 624l-90 -2 -32 2 -32 -2 -28 0 -120 1 -104 -1 -46 2 -46 -2 -38 1 -16 1 -84 -2 -36 2 -32 -2 -40 0 -1 -8 1 -9 32 0 28 -4 24 3 16 1 92 -4 72 3 36 -4 50 6 100 -5 120 4 20 -1 20 -3 24 3 16 1 90 -4 74 3 40 -4 36 5 24 0 1 7 -1 10 -31 0 -41 2 -50 -2 -36 1 -12 1zM914 774l-116 -1 -122 1 -200 -1 -122 1 -106 -1 -120 1 -106 0 -22 -1 -1 -9 1 -11 16 1 14 0 11 -2 21 -5 3 1 1 4 4 1 28 1 80 -3 92 1 23 -2 5 -2 2 -3 4 -1 30 10 16 2 20 -1 36 -6 42 -3 24 1 94 7 22 -1 24 -6 3 1 1 4 4 1 30 1 82 -3 88 1 22 -2 6 -2 2 -3 4 -1 36 11 10 1 14 -1 1 11 -1 8z"/>
<path fill="rgb(0, 255, 0)" d="M860 324l-4 0 -8 -3 -30 -2 -88 2 -104 -4 -13 1 -5 4 -26 -4 -16 0 -94 6 -20 1 -44 -3 -36 -4 -22 -2 -16 2 -24 6 -14 -3 -28 -2 -88 2 -88 -4 -28 1 -5 4 -3 0 -29 -4 -27 1 -1 -11 1 -8 40 0 210 1 102 -2 116 2 206 -1 124 1 116 -1 1 8 -1 9 -22 0 -32 7zM866 472l-14 1 -42 -2 -78 2 -88 -3 -36 2 -38 -2 -114 3 -106 -4 -44 4 -46 -2 -80 2 -82 -3 -42 2 -24 -2 -32 0 -1 -10 1 -6 68 -2 36 1 44 -1 16 1 26 -2 16 2 42 0 46 -1 48 1 102 0 116 1 60 -2 40 1 38 -1 16 1 24 -2 18 2 34 0 56 -1 68 1 1 9 -1 7 -24 0 -24 3zM186 538l-3 0 -2 -2 0 -4 3 -2 4 0 2 2 -1 4 -3 2zM736 538l-4 -1 -1 -3 1 -3 2 -2 4 1 2 2 -1 4 -3 2zM872 622l-30 1 -52 -1 -34 0 -16 2 -88 -2 -32 1 -60 -2 -222 1 -42 1 -50 -1 -38 0 -18 2 -90 -2 -30 1 -28 -1 -42 0 -1 -8 1 -9 28 0 30 -2 40 2 88 -3 78 2 40 -2 48 4 100 -4 118 4 36 -3 44 2 86 -3 80 2 40 -2 36 4 22 0 1 8 -1 8 -42 0zM914 774l-126 -2 -114 2 -198 -2 -128 2 -104 -2 -110 2 -102 0 -32 -1 -1 -7 1 -12 28 0 28 -4 2 1 5 3 3 1 26 0 86 -3 92 1 26 -2 12 -3 30 7 12 1 12 0 50 -6 44 -3 110 8 17 -1 23 -4 2 0 5 4 3 1 22 0 94 -3 86 1 28 -2 12 -3 6 1 28 7 22 0 1 10 -1 8z"/>
<path fill="rgb(146, 255, 0)" d="M492 322l-26 1 -40 -1 -76 -6 -10 1 -28 5 -13 -2 -29 -1 -90 1 -108 -4 -10 1 -10 3 -26 -2 -26 0 -1 -12 1 -5 126 -1 124 2 102 -2 116 1 206 -1 118 2 122 -2 1 6 -1 10 -20 0 -30 6 -14 -2 -30 -1 -90 1 -106 -4 -12 1 -10 3 -22 -2 -14 -1 -74 5zM744 472l-100 -3 -40 2 -44 -2 -90 3 -58 -1 -60 -2 -46 3 -40 -2 -76 2 -92 -3 -44 2 -26 -2 -28 1 -1 -10 1 -6 66 -2 40 1 82 -1 18 1 46 1 44 -1 48 1 224 0 48 -2 38 1 84 -1 18 1 50 1 44 -1 64 1 1 6 -1 9 -22 0 -34 3 -46 -2 -68 2zM862 622l-70 -1 -56 2 -20 -1 -18 1 -40 -1 -40 1 -58 -2 -222 0 -40 1 -44 -1 -48 1 -16 1 -82 -1 -42 1 -66 -2 -1 -7 1 -9 24 1 32 -2 36 2 92 -3 80 2 44 -2 42 3 110 -3 110 3 34 -2 46 2 86 -3 80 2 42 -2 31 3 25 0 1 8 -1 7 -52 1zM914 774l-128 -2 -190 1 -130 -1 -118 2 -104 -2 -212 1 -32 0 -1 -7 1 -12 24 1 28 -3 11 4 17 0 98 -3 92 1 30 -2 12 -2 27 6 13 1 60 -6 50 -2 104 6 14 0 22 -3 11 4 9 0 110 -4 88 2 32 -2 10 -2 28 6 24 0 1 10 -1 8z"/>
<path fill="rgb(255, 212, 0)" d="M476 322l-66 -2 -58 -4 -11 0 -27 5 -42 -3 -92 1 -108 -3 -13 0 -11 3 -26 -2 -22 1 -1 -12 1 -5 120 0 130 1 102 -2 116 1 200 0 124 1 122 -2 1 6 -1 10 -22 0 -26 4 -48 -2 -46 1 -60 0 -94 -3 -9 0 -9 3 -36 -2 -88 5zM874 470l-18 1 -48 -1 -72 2 -92 -3 -42 1 -32 -1 -100 2 -120 -3 -38 3 -52 -1 -78 2 -88 -3 -42 1 -52 -1 -1 -9 1 -6 64 -1 32 1 54 -1 16 1 22 -2 18 2 44 0 50 -1 42 1 218 0 54 -1 32 1 54 -1 14 1 22 -1 54 1 58 -1 66 1 1 8 -1 7 -20 0 -20 1zM746 622l-188 -1 -260 1 -44 -1 -48 0 -18 1 -24 -1 -102 1 -62 -1 -1 -7 1 -8 28 0 24 -1 46 1 88 -3 78 2 46 -1 40 3 120 -3 92 2 40 -1 34 1 98 -3 80 2 44 -1 32 2 24 0 1 6 -1 9 -66 1 -56 -1 -46 1zM914 773l-128 -2 -192 2 -128 -1 -118 1 -104 -2 -208 2 -36 -1 -1 -6 1 -11 22 1 26 -2 12 3 10 0 98 -4 102 1 44 -2 24 4 14 1 54 -5 64 -2 96 6 34 -2 8 2 12 1 98 -4 100 1 46 -2 28 5 22 0 1 9 -1 7z"/>
<path fill="rgb(255, 64, 0)" d="M506 320l-30 1 -62 -2 -64 -4 -34 4 -46 -1 -100 0 -104 -3 -10 1 -10 2 -26 -1 -20 0 -1 -11 1 -5 22 0 212 1 118 -2 116 2 134 -1 178 1 134 -2 1 6 -1 10 -22 0 -26 3 -44 -1 -100 0 -104 -3 -12 1 -10 2 -30 -1 -60 3zM870 470l-14 1 -46 -2 -76 2 -100 -3 -160 3 -124 -3 -38 3 -52 -2 -76 2 -94 -3 -40 1 -50 0 -1 -9 1 -6 62 -1 102 1 24 -1 18 1 44 1 52 -1 258 0 52 -1 102 1 22 -1 54 2 60 -1 64 0 1 8 -1 6 -20 0 -24 2zM914 621l-64 1 -60 -1 -54 1 -20 -1 -102 1 -56 -1 -256 1 -48 -2 -48 1 -18 1 -24 -1 -102 1 -62 -1 -1 -7 1 -8 98 1 86 -3 80 2 46 -2 40 3 120 -3 92 2 38 0 36 1 98 -3 80 2 46 -2 32 3 22 0 1 7 -1 7zM914 773l-130 -2 -190 2 -128 -1 -118 1 -48 -2 -70 0 -194 2 -36 -1 -1 -6 1 -11 22 1 24 -1 12 2 10 1 100 -4 104 1 44 -2 24 4 12 0 52 -4 74 -2 85 5 33 -1 12 2 10 1 100 -4 102 1 46 -2 28 4 20 0 1 9 -1 7z"/>
<path fill="rgb(255, 0, 0)" d="M500 320l-24 0 -72 -2 -54 -3 -32 4 -46 -2 -92 1 -114 -3 -22 2 -24 -1 -20 1 -1 -11 1 -5 22 0 210 2 120 -3 116 2 134 -1 178 2 134 -3 1 6 -1 10 -20 -1 -26 4 -46 -2 -100 1 -106 -3 -22 2 -28 -1 -66 4zM864 470l-54 -1 -76 2 -100 -3 -154 2 -128 -2 -40 2 -52 -1 -74 2 -96 -3 -90 1 -1 -9 1 -5 60 -1 106 0 22 -1 18 2 44 0 54 -1 410 0 22 -1 54 2 60 -1 64 0 1 8 -1 6 -19 0 -31 2zM914 621l-64 0 -50 -1 -64 2 -78 -1 -356 0 -58 -1 -58 2 -22 -1 -104 0 -60 0 -1 -7 1 -8 92 1 92 -3 80 2 48 -1 38 2 128 -2 156 2 100 -3 80 2 46 -1 32 2 22 0 1 7 -1 7zM914 773l-130 -3 -190 3 -128 -2 -118 2 -48 -2 -70 -1 -194 3 -36 -1 -1 -6 1 -10 22 0 22 0 13 2 11 0 100 -3 104 0 46 -1 24 3 10 1 46 -4 88 -2 76 4 32 0 14 2 10 0 100 -3 102 0 48 -1 26 3 20 0 1 9 -1 7z"/>
</g>
</g><path d="M125.7,191.4 L154.4,191.4 L139.6,202.5Z" fill="#000"/><path d="M400.5,191.0 L429.5,191.0 L414.8,202.5Z" fill="#000"/><path d="M120.5,394.6 L156.5,394.6 L139.2,380.5Z" fill="#000"/><path d="M396.0,394.4 L431.0,394.4 L414.5,380.6Z" fill="#000"/></g>
<path d="M559.0,498.1 C560.7,498.2 566.3,498.2 569.0,498.4 C571.7,498.6 573.0,499.3 575.3,499.4 C577.6,499.5 580.6,499.0 583.0,498.9 C585.4,498.8 586.6,498.1 589.4,498.6 C592.1,499.1 596.9,501.9 599.5,502.0 C602.1,502.1 603.2,499.9 605.0,499.0 C606.8,498.1 607.9,496.9 610.5,496.9 C613.1,496.9 617.4,498.9 620.6,498.9 C623.9,498.9 626.9,497.1 630.0,496.9 C633.1,496.7 636.0,498.2 639.4,497.8 C642.8,497.4 647.7,494.7 650.3,494.2 C652.9,493.7 652.9,494.4 655.0,495.0 C657.1,495.6 659.4,498.6 662.8,497.8 C666.2,497.0 672.2,491.0 675.3,490.3 C678.4,489.6 680.1,493.3 681.6,493.4 C683.1,493.5 683.7,492.6 684.5,491.0 C685.3,489.4 685.8,488.3 686.6,484.0 C687.4,479.7 688.3,474.1 689.3,465.0 C690.3,455.9 691.4,446.8 692.6,429.7 C693.8,412.6 695.1,384.7 696.4,362.4 C697.7,340.1 699.4,313.3 700.4,295.7 C701.4,278.1 701.6,267.8 702.3,256.5 C703.0,245.2 703.9,235.1 704.6,228.0 C705.4,220.9 705.9,217.0 706.8,214.0 C707.6,211.0 708.7,210.1 709.7,209.9 C710.7,209.7 711.9,210.8 713.0,213.0 C714.1,215.2 715.4,220.4 716.5,223.0 C717.6,225.6 718.5,228.1 719.5,228.8 C720.5,229.5 721.5,228.5 722.5,227.0 C723.5,225.5 724.5,221.8 725.5,220.0 C726.5,218.2 727.8,216.2 728.8,216.0 C729.8,215.8 730.5,217.1 731.3,219.0 C732.1,220.9 732.7,221.3 733.5,227.6 C734.3,233.8 735.4,245.2 736.3,256.5 C737.2,267.9 737.8,278.1 739.0,295.7 C740.2,313.3 742.2,340.1 743.5,362.4 C744.8,384.7 745.8,412.6 746.8,429.7 C747.8,446.8 748.4,455.9 749.2,465.0 C750.0,474.1 750.7,479.1 751.7,484.0 C752.7,488.9 753.9,493.1 755.2,494.3 C756.5,495.5 757.7,492.6 759.5,491.0 C761.3,489.4 763.9,484.7 766.0,484.5 C768.1,484.3 769.7,487.3 772.0,490.0 C774.3,492.7 777.6,498.2 780.0,500.5 C782.4,502.8 783.9,503.2 786.2,503.6 C788.6,504.0 791.7,503.6 794.0,503.1 C796.3,502.6 798.2,501.6 800.3,500.5 C802.4,499.4 804.8,497.0 806.6,496.2 C808.4,495.5 809.6,495.9 811.2,496.2 C812.9,496.6 815.1,498.1 816.7,498.4 C818.3,498.7 818.0,500.2 820.6,498.1 C823.2,496.0 829.3,487.5 832.3,485.9 C835.3,484.3 835.9,487.4 838.6,488.8 C841.3,490.1 845.8,493.4 848.8,494.2 C851.8,495.0 854.3,493.8 856.6,493.8 C858.9,493.8 860.5,493.3 862.8,494.2 C865.1,495.1 867.9,496.7 870.6,498.9 C873.3,501.1 876.9,506.1 879.2,507.2 C881.6,508.3 882.2,507.2 884.7,505.6 C887.2,504.0 891.7,498.9 894.0,497.3 C896.3,495.7 896.6,495.5 898.8,495.8 C900.9,496.1 904.3,498.8 906.6,498.9 C908.9,499.0 910.5,498.2 912.8,496.2 C915.1,494.2 918.6,488.7 920.6,486.9 C922.6,485.1 922.4,485.2 924.5,485.6 C926.6,486.0 929.7,487.7 933.1,489.5 C936.5,491.3 941.5,495.6 945.0,496.5 C948.5,497.4 951.7,494.5 954.3,494.9 C956.9,495.3 957.8,496.9 960.4,499.0 C963.0,501.1 965.3,507.6 969.6,507.2 C973.9,506.8 981.2,498.2 986.0,496.5 C990.8,494.8 995.6,496.8 998.4,496.9 C1001.1,497.0 999.6,498.9 1002.5,496.9 C1005.4,494.8 1013.8,486.7 1016.0,484.6" fill="none" stroke="#18ee1c" stroke-width="1.7" stroke-linejoin="round"/>
<path d="M136.6,569.8 L139.1,564.6 L141.6,569.8Z" fill="#10e090"/><rect x="138.4" y="569" width="1.4" height="5" fill="#10e090"/>
<path d="M693.8,570 L696.4,564.6 L699,570Z" fill="#14ee14"/>
</svg>
<div class="yl c1" style="right:980px;top:25.9px">401.5 mV</div>
<div class="yl c2" style="right:468px;top:25.9px">280 mV</div>
<div class="yl c1" style="right:980px;top:89.0px">301.5 mV</div>
<div class="yl c2" style="right:468px;top:89.0px">240 mV</div>
<div class="yl c1" style="right:980px;top:156.2px">201.5 mV</div>
<div class="yl c2" style="right:468px;top:156.2px">200 mV</div>
<div class="yl c1" style="right:980px;top:223.4px">101.5 mV</div>
<div class="yl c2" style="right:468px;top:223.4px">160 mV</div>
<div class="yl c1" style="right:980px;top:290.7px">1.5 mV</div>
<div class="yl c2" style="right:468px;top:290.7px">120 mV</div>
<div class="yl c1" style="right:980px;top:357.9px">-98.5 mV</div>
<div class="yl c2" style="right:468px;top:357.9px">80 mV</div>
<div class="yl c1" style="right:980px;top:425.2px">-198.5 mV</div>
<div class="yl c2" style="right:468px;top:425.2px">40 mV</div>
<div class="yl c1" style="right:980px;top:492.4px">-298.5 mV</div>
<div class="yl c1" style="right:980px;top:555.7px">-398.5 mV</div>
<div class="yl c2" style="right:468px;top:555.7px">-40 mV</div>
<div class="xl c1" style="left:47.0px;top:566px">-20.8 ps</div>
<div class="xl c2" style="left:559.0px;top:566px">-187.5 ps</div>
<div class="xl c1" style="left:98.6px;width:80px;text-align:center;top:566px">3 fs</div>
<div class="xl c2" style="left:610.6px;width:80px;text-align:center;top:566px">-62.5 ps</div>
<div class="xl c1" style="left:190.2px;width:80px;text-align:center;top:566px">20.8 ps</div>
<div class="xl c2" style="left:702.2px;width:80px;text-align:center;top:566px">62.5 ps</div>
<div class="xl c1" style="left:281.8px;width:80px;text-align:center;top:566px">41.7 ps</div>
<div class="xl c2" style="left:793.8px;width:80px;text-align:center;top:566px">187.5 ps</div>
<div class="xl c1" style="left:373.4px;width:80px;text-align:center;top:566px">62.5 ps</div>
<div class="xl c2" style="left:885.4px;width:80px;text-align:center;top:566px">312.5 ps</div>
<div class="xl c1" style="right:519.0px;top:566px">83.3 ps</div>
<div class="xl c2" style="right:7.0px;top:566px">437.5 ps</div>
<div class="yl c2" style="right:468px;top:492px">0 mV</div>
<div style="position:absolute;left:540px;top:489px;width:19px;height:7px;background:#22c51c;border-radius:1.5px;font-size:6px;line-height:7px;color:#053;text-align:center;overflow:hidden">Pulse</div>
<div style="position:absolute;left:33.5px;top:287px;width:13.5px;height:7px;background:#14c878;border-radius:1.5px;font-size:6px;line-height:8px;color:#063;text-align:center;overflow:hidden">Eye</div>
<div style="position:absolute;left:3px;top:585px;width:64px;height:42px;background:#4a4a4a"></div>
<div style="position:absolute;left:3px;top:585px;width:64px;height:11px;background:#16d090;font-size:9px;line-height:11px;color:#0a3a20;padding-left:2px">Eye</div>
<div class="bx" style="left:3px;top:596px;width:63px">100 mV/<br>10.4 ps/<br>796.698 k#</div>
<div style="position:absolute;left:69px;top:585px;width:66px;height:42px;background:#2c4a66;border:1px solid #2f8ad8"></div>
<div style="position:absolute;left:70px;top:586px;width:64px;height:10px;background:#1ec81e;font-size:9px;line-height:10px;color:#063a06;padding-left:1px">Pulse</div>
<div class="bx" style="left:70px;top:596px;width:63px">40.0 mV/<br>63 ps/<br>1 #</div>
<div style="position:absolute;left:136px;top:585px;width:65px;height:42px;border:1px dashed #bbb"></div>
<div style="position:absolute;left:136px;top:596px;width:65px;text-align:center;font-size:16px;line-height:20px;color:#fff">+</div>
<div style="position:absolute;left:813px;top:585px;width:64px;height:32px;background:#4a4a4a"></div>
<div style="position:absolute;left:813px;top:585px;width:64px;height:11px;background:#d0d0d0;font-size:9px;line-height:11px;color:#333;padding-left:2px">SDAX:PAM4</div>
<div class="bx" style="left:815px;top:597px;width:62px;text-align:left">16.00 GBaud</div>
<div style="position:absolute;left:879px;top:585px;width:76px;height:32px;background:#4a4a4a"></div>
<div style="position:absolute;left:879px;top:585px;width:76px;height:11px;background:#f4f4f4;font-size:9px;line-height:11px;color:#333;padding-left:2px">Timebase<span style="position:absolute;right:2px">0.0 μs</span></div>
<div class="bx" style="left:879px;top:597px;width:75px">5.00 μs/div<br><span style="float:left;padding-left:2px">4 MS</span>80 GS/s</div>
<div style="position:absolute;left:956px;top:585px;width:65px;height:32px;background:#4a4a4a"></div>
<div style="position:absolute;left:956px;top:585px;width:65px;height:11px;background:#f4f4f4;font-size:9px;line-height:11px;color:#333;padding-left:2px">Trigger</div>
<div style="position:absolute;left:996px;top:586px;width:24px;height:9px;background:#333;font-size:7px;line-height:9px;color:#ddd;text-align:center">C1 DC</div>
<div class="bx" style="left:956px;top:597px;width:64px"><span style="float:left;padding-left:2px">Stop</span>0.0 mV<br><span style="float:left;padding-left:2px">Edge</span>Positive</div>
</div>
<div id="status">
</div>
<div style="position:absolute;left:5px;top:629px;font-size:9.6px;line-height:11px;color:#f4f4f4;white-space:nowrap;font-weight:bold;transform:scaleX(0.86);transform-origin:0 0">TELEDYNE</div>
<div style="position:absolute;left:51.6px;top:629px;font-size:9.6px;line-height:11px;color:#e6e6e6;white-space:nowrap;font-weight:normal;transform:scaleX(0.76);transform-origin:0 0">LECROY</div>
<div style="position:absolute;left:86px;top:631px;width:1px;height:8px;background:#ccc"></div>
<div style="position:absolute;left:89.6px;top:629px;font-size:9.6px;line-height:11px;color:#4cd13c;white-space:nowrap;font-weight:bold;transform:scaleX(0.87);transform-origin:0 0">HD</div>
<div style="position:absolute;left:105.8px;top:629px;font-size:9.6px;line-height:11px;color:#f0f0f0;white-space:nowrap;font-weight:normal;transform:scaleX(0.97);transform-origin:0 0">12 bits</div>
<div style="position:absolute;left:928px;top:629px;font-size:9.6px;line-height:11px;color:#eee;white-space:nowrap;transform:scaleX(0.9);transform-origin:0 0">7/25/2023 5:38:58 PM</div>
<div style="position:absolute;left:459px;top:633px;width:106px;height:3px;background:#f2f2f2;border-radius:1px"></div>
</body></html>
